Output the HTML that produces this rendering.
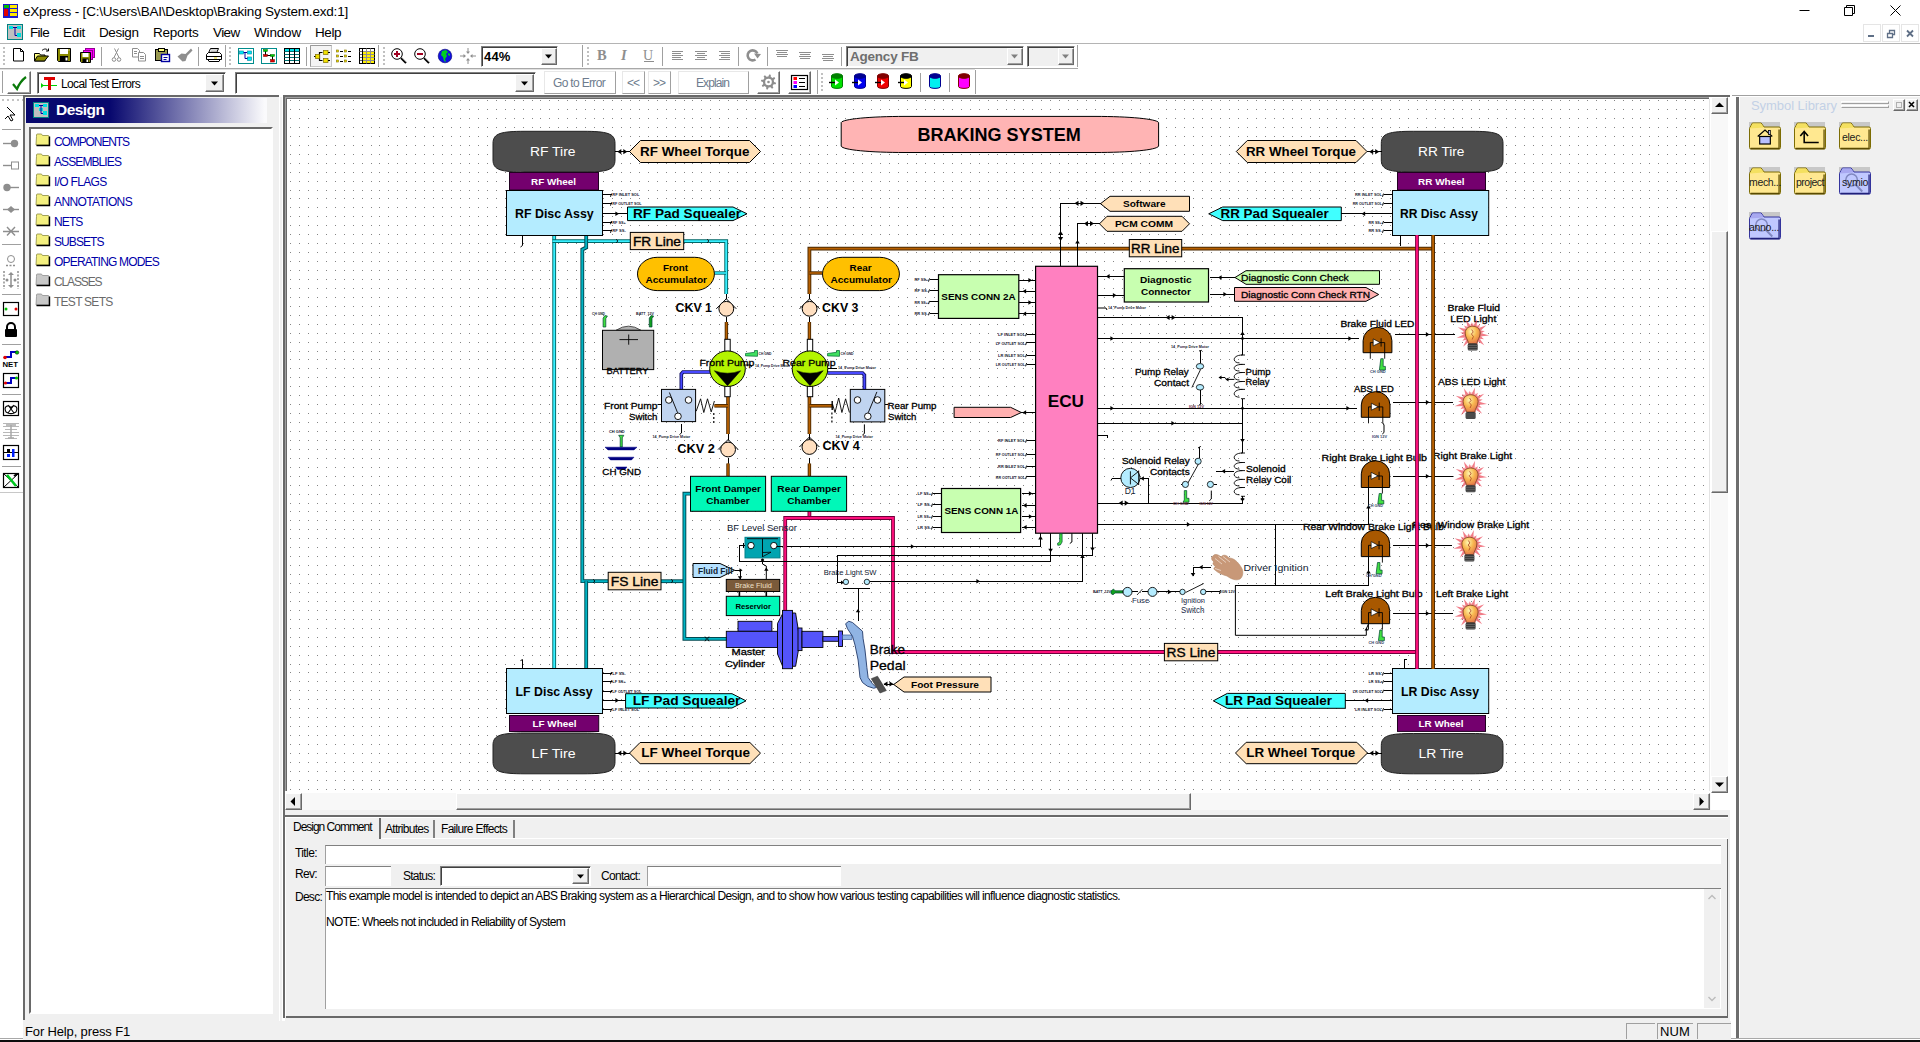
<!DOCTYPE html>
<html lang="en"><head><meta charset="utf-8"><title>eXpress - Braking System</title>
<style>
*{box-sizing:border-box;margin:0;padding:0}
html,body{width:1920px;height:1042px;overflow:hidden;background:#fff;font-family:"Liberation Sans",sans-serif;font-size:12px;color:#000}
.a{position:absolute}
.t{position:absolute;white-space:nowrap;line-height:1}
.menu{font-size:13.5px;top:26px}
.sunk{position:absolute;background:#fff;border:1px solid;border-color:#808080 #fff #fff #808080;box-shadow:inset 1px 1px 0 #404040}
.rais{position:absolute;background:#f0f0f0;border:1px solid;border-color:#fff #696969 #696969 #fff;box-shadow:inset -1px -1px 0 #a0a0a0}
.btn{position:absolute;background:#fff;border:1px solid;border-color:#e8e8e8 #a0a0a0 #a0a0a0 #e8e8e8}
.sep{position:absolute;width:2px;border-left:1px solid #a0a0a0;border-right:1px solid #fff}
.tree{font-size:12px;color:#0000a0;left:54px;letter-spacing:-0.2px}
.grip{position:absolute;width:3px;border-left:2px dotted #c0c0c0}
svg text{font-family:"Liberation Sans",sans-serif}
</style></head><body>
<!-- ===== title bar ===== -->
<svg class="a" style="left:3px;top:3px" width="15" height="15" viewBox="0 0 15 15"><rect x="0" y="1" width="15" height="14" fill="#1c1ccc"/><rect x="1" y="2" width="5" height="3" fill="#00c000"/><rect x="1" y="6" width="4" height="7" fill="#e00000"/><rect x="7" y="2" width="7" height="3" fill="#ffe800"/><rect x="7" y="6" width="7" height="3" fill="#ffe800"/><rect x="7" y="10" width="7" height="3" fill="#ffe800"/></svg>
<div class="t" style="left:23px;top:5px;font-size:13.5px;letter-spacing:-0.195px">eXpress - [C:\Users\BAI\Desktop\Braking System.exd:1]</div>
<svg class="a" style="left:1790px;top:0" width="130" height="22" viewBox="0 0 130 22"><path d="M9.5 10.5h10M54.5 7.5h8v8h-8zM56.5 7.5v-2h8v8h-2M100.500 5.500l10 10M110.500 5.500l-10 10" fill="none" stroke="#000" stroke-width="1"/></svg>
<!-- ===== menu bar ===== -->
<svg class="a" style="left:7px;top:24px" width="16" height="16" viewBox="0 0 16 16"><rect x=".5" y=".5" width="15" height="15" fill="#c0c0c0" stroke="#008080"/><rect x="2" y="2" width="4" height="3" fill="#00e0e0"/><rect x="10" y="2" width="4" height="3" fill="#00e0e0"/><rect x="10" y="9" width="4" height="4" fill="#00e0e0"/><path d="M6 3.500h4M8 3.500v8h2" stroke="#0000a0" fill="none"/></svg>
<div class="t menu" style="left:30px;letter-spacing:-0.688px">File</div>
<div class="t menu" style="left:63px;letter-spacing:-0.316px">Edit</div>
<div class="t menu" style="left:99px;letter-spacing:-0.420px">Design</div>
<div class="t menu" style="left:153px;letter-spacing:-0.252px">Reports</div>
<div class="t menu" style="left:213px;letter-spacing:-0.629px">View</div>
<div class="t menu" style="left:254px;letter-spacing:-0.169px">Window</div>
<div class="t menu" style="left:315px;letter-spacing:-0.441px">Help</div>
<!-- mdi buttons -->
<div class="a" style="left:1863px;top:24px;width:18px;height:18px;border:1px solid #e5e5e5"></div>
<div class="a" style="left:1882px;top:24px;width:18px;height:18px;border:1px solid #e5e5e5"></div>
<div class="a" style="left:1901px;top:24px;width:18px;height:18px;border:1px solid #e5e5e5"></div>
<svg class="a" style="left:1863px;top:24px" width="57" height="18" viewBox="0 0 57 18"><path d="M5 12h6" stroke="#5f6f86" stroke-width="2"/><path d="M24.500 9.500h5v4h-5zM26.500 9v-2.500h5v4h-2" fill="none" stroke="#5f6f86" stroke-width="1.300"/><path d="M44 6.500l6 6M50 6.500l-6 6" stroke="#5f6f86" stroke-width="1.800"/></svg>
<!-- ===== toolbar 1 ===== -->
<div class="a" style="left:0;top:43px;width:1920px;height:1px;background:#b4b4b4"></div>
<div class="a" style="left:0;top:68px;width:1078px;height:1px;background:#a8a8a8"></div>
<div class="grip" style="left:3px;top:47px;height:18px"></div>
<div class="grip" style="left:229px;top:47px;height:18px"></div>
<div class="grip" style="left:383px;top:47px;height:18px"></div>
<div class="grip" style="left:587px;top:47px;height:18px"></div>
<div class="sep" style="left:101px;top:47px;height:19px"></div>
<div class="sep" style="left:198px;top:47px;height:19px"></div>
<div class="sep" style="left:225px;top:45px;height:22px"></div>
<div class="sep" style="left:306px;top:47px;height:19px"></div>
<div class="sep" style="left:378px;top:45px;height:22px"></div>
<div class="sep" style="left:582px;top:45px;height:22px"></div>
<div class="sep" style="left:662px;top:47px;height:19px"></div>
<div class="sep" style="left:738px;top:47px;height:19px"></div>
<div class="sep" style="left:767px;top:47px;height:19px"></div>
<div class="sep" style="left:841px;top:47px;height:19px"></div>
<div class="sep" style="left:1077px;top:45px;height:22px"></div>
<div class="sunk" style="left:481px;top:46px;width:77px;height:21px"></div>
<div class="t" style="left:484px;top:50px;font-size:13px;font-weight:bold;letter-spacing:0.161px">44%</div>
<div class="rais" style="left:541px;top:48px;width:16px;height:17px"></div>
<svg class="a" style="left:545px;top:54px" width="8" height="5"><path d="M0 .5h7l-3.500 4z" fill="#000"/></svg>
<div class="sunk" style="left:846px;top:46px;width:178px;height:21px;background:#f0f0f0"></div>
<div class="t" style="left:850px;top:50px;font-size:13.5px;font-weight:bold;color:#6e6e6e;letter-spacing:-0.223px">Agency FB</div>
<div class="rais" style="left:1007px;top:48px;width:16px;height:17px"></div>
<svg class="a" style="left:1011px;top:54px" width="8" height="5"><path d="M0 .5h7l-3.500 4z" fill="#808080"/></svg>
<div class="sunk" style="left:1027px;top:46px;width:48px;height:21px;background:#f0f0f0"></div>
<div class="rais" style="left:1058px;top:48px;width:16px;height:17px"></div>
<svg class="a" style="left:1062px;top:54px" width="8" height="5"><path d="M0 .5h7l-3.500 4z" fill="#808080"/></svg>
<!-- ===== toolbar 2 ===== -->
<div class="a" style="left:0;top:69px;width:975px;height:1px;background:#e0e0e0"></div>
<div class="a" style="left:0;top:95px;width:23px;height:1px;background:#a0a0a0"></div>
<div class="sep" style="left:2px;top:71px;height:22px"></div>
<div class="rais" style="left:7px;top:71px;width:24px;height:23px;background:#fff"></div>
<svg class="a" style="left:11px;top:75px" width="16" height="16"><path d="M2 9l4 5c2-5 5-9 9-12" fill="none" stroke="#0a7a0a" stroke-width="2.200"/></svg>
<div class="sunk" style="left:37px;top:72px;width:189px;height:22px"></div>
<svg class="a" style="left:40px;top:75px" width="18" height="16"><path d="M1 10.500h16" stroke="#00d000" stroke-width="1"/><path d="M1 8l3 2.500-3 2.500z" fill="#00d000"/><path d="M4 2h11v3h-4v10h-3v-10h-4z" fill="#e00000"/></svg>
<div class="t" style="left:61px;top:78px;font-size:12px;letter-spacing:-0.636px">Local Test Errors</div>
<div class="rais" style="left:205px;top:74px;width:19px;height:18px"></div>
<svg class="a" style="left:211px;top:81px" width="8" height="5"><path d="M0 .5h7l-3.500 4z" fill="#000"/></svg>
<div class="sunk" style="left:235px;top:72px;width:301px;height:22px"></div>
<div class="rais" style="left:515px;top:74px;width:19px;height:18px"></div>
<svg class="a" style="left:521px;top:81px" width="8" height="5"><path d="M0 .5h7l-3.500 4z" fill="#000"/></svg>
<div class="btn" style="left:544px;top:71px;width:72px;height:23px"></div>
<div class="t" style="left:553px;top:77px;font-size:12px;color:#6d7b8d;letter-spacing:-0.668px">Go to Error</div>
<div class="btn" style="left:622px;top:71px;width:23px;height:23px"></div>
<div class="t" style="left:627px;top:77px;font-size:12px;color:#6d7b8d;letter-spacing:-1.009px">&lt;&lt;</div>
<div class="btn" style="left:648px;top:71px;width:23px;height:23px"></div>
<div class="t" style="left:653px;top:77px;font-size:12px;color:#6d7b8d;letter-spacing:-1.009px">&gt;&gt;</div>
<div class="btn" style="left:678px;top:71px;width:71px;height:23px"></div>
<div class="t" style="left:696px;top:77px;font-size:12px;color:#6d7b8d;letter-spacing:-0.908px">Explain</div>
<div class="rais" style="left:757px;top:71px;width:23px;height:23px;background:#fff"></div>
<div class="rais" style="left:788px;top:71px;width:23px;height:23px;background:#fff"></div>
<div class="sep" style="left:817px;top:70px;height:24px"></div>
<div class="grip" style="left:821px;top:73px;height:18px"></div>
<div class="sep" style="left:920px;top:73px;height:19px"></div>
<div class="sep" style="left:949px;top:73px;height:19px"></div>
<div class="sep" style="left:975px;top:70px;height:24px"></div>

<!-- ===== left vertical toolbar ===== -->
<div class="a" style="left:2px;top:99px;width:22px;height:2px;background:repeating-linear-gradient(90deg,#c4c4c4 0,#c4c4c4 2px,transparent 2px,transparent 5px)"></div>

<!-- ===== design panel ===== -->
<div class="a" style="left:23px;top:97px;width:256px;height:924px;background:#f0f0f0"></div>
<div class="a" style="left:23px;top:95px;width:256px;height:2px;background:#696969"></div>
<div class="a" style="left:23px;top:97px;width:2px;height:923px;background:#696969"></div>
<div class="a" style="left:279px;top:95px;width:4px;height:2px;background:#fff"></div><div class="a" style="left:279px;top:97px;width:1px;height:924px;background:#fff"></div><div class="a" style="left:282px;top:97px;width:1px;height:924px;background:#fff"></div>
<div class="a" style="left:280px;top:97px;width:2px;height:924px;background:#f0f0f0"></div>
<div class="a" style="left:26px;top:98px;width:241px;height:25px;background:linear-gradient(90deg,#08086e 0,#08086e 35%,#fafafc 99%)"></div>
<svg class="a" style="left:33px;top:102px" width="17" height="16" viewBox="0 0 17 16"><rect x=".5" y=".5" width="15" height="15" fill="#c0c0c0" stroke="#008080"/><rect x="2" y="2" width="4" height="3" fill="#00e0e0"/><rect x="10" y="2" width="4" height="3" fill="#00e0e0"/><rect x="10" y="9" width="4" height="4" fill="#00e0e0"/><rect x="6" y="6" width="4" height="3" fill="#00e0e0"/><path d="M6 3.500h4M8 3.500v8h2" stroke="#0000a0" fill="none"/></svg>
<div class="t" style="left:56px;top:102px;font-size:15.500px;font-weight:bold;color:#fff;letter-spacing:-0.529px">Design</div>
<div class="a" style="left:29px;top:127px;width:244px;height:887px;background:#fff;border:2px solid;border-color:#696969 #fff #fff #696969"></div>
<svg class="a" style="left:35px;top:133px" width="16" height="15" viewBox="0 0 16 15"><path d="M1.500 3.500v-1.500q0-1 1-1h3.500q1 0 1.500 1.500h5.500q1 0 1 1v8.500h-13z" fill="#f4f080" stroke="#8a8a40" stroke-width=".8"/><path d="M1.500 12.500h13v-9" fill="none" stroke="#000" stroke-width="1.400"/></svg>
<div class="t tree" style="top:136px;font-size:12px;color:#0000a8;letter-spacing:-1.100px">COMPONENTS</div>
<svg class="a" style="left:35px;top:153px" width="16" height="15" viewBox="0 0 16 15"><path d="M1.500 3.500v-1.500q0-1 1-1h3.500q1 0 1.500 1.500h5.500q1 0 1 1v8.500h-13z" fill="#f4f080" stroke="#8a8a40" stroke-width=".8"/><path d="M1.500 12.500h13v-9" fill="none" stroke="#000" stroke-width="1.400"/></svg>
<div class="t tree" style="top:156px;font-size:12px;color:#0000a8;letter-spacing:-0.903px">ASSEMBLIES</div>
<svg class="a" style="left:35px;top:173px" width="16" height="15" viewBox="0 0 16 15"><path d="M1.500 3.500v-1.500q0-1 1-1h3.500q1 0 1.500 1.500h5.500q1 0 1 1v8.500h-13z" fill="#f4f080" stroke="#8a8a40" stroke-width=".8"/><path d="M1.500 12.500h13v-9" fill="none" stroke="#000" stroke-width="1.400"/></svg>
<div class="t tree" style="top:176px;font-size:12px;color:#0000a8;letter-spacing:-0.687px">I/O FLAGS</div>
<svg class="a" style="left:35px;top:193px" width="16" height="15" viewBox="0 0 16 15"><path d="M1.500 3.500v-1.500q0-1 1-1h3.500q1 0 1.500 1.500h5.500q1 0 1 1v8.500h-13z" fill="#f4f080" stroke="#8a8a40" stroke-width=".8"/><path d="M1.500 12.500h13v-9" fill="none" stroke="#000" stroke-width="1.400"/></svg>
<div class="t tree" style="top:196px;font-size:12px;color:#0000a8;letter-spacing:-0.626px">ANNOTATIONS</div>
<svg class="a" style="left:35px;top:213px" width="16" height="15" viewBox="0 0 16 15"><path d="M1.500 3.500v-1.500q0-1 1-1h3.500q1 0 1.500 1.500h5.500q1 0 1 1v8.500h-13z" fill="#f4f080" stroke="#8a8a40" stroke-width=".8"/><path d="M1.500 12.500h13v-9" fill="none" stroke="#000" stroke-width="1.400"/></svg>
<div class="t tree" style="top:216px;font-size:12px;color:#0000a8;letter-spacing:-0.876px">NETS</div>
<svg class="a" style="left:35px;top:233px" width="16" height="15" viewBox="0 0 16 15"><path d="M1.500 3.500v-1.500q0-1 1-1h3.500q1 0 1.500 1.500h5.500q1 0 1 1v8.500h-13z" fill="#f4f080" stroke="#8a8a40" stroke-width=".8"/><path d="M1.500 12.500h13v-9" fill="none" stroke="#000" stroke-width="1.400"/></svg>
<div class="t tree" style="top:236px;font-size:12px;color:#0000a8;letter-spacing:-0.931px">SUBSETS</div>
<svg class="a" style="left:35px;top:253px" width="16" height="15" viewBox="0 0 16 15"><path d="M1.500 3.500v-1.500q0-1 1-1h3.500q1 0 1.500 1.500h5.500q1 0 1 1v8.500h-13z" fill="#f4f080" stroke="#8a8a40" stroke-width=".8"/><path d="M1.500 12.500h13v-9" fill="none" stroke="#000" stroke-width="1.400"/></svg>
<div class="t tree" style="top:256px;font-size:12px;color:#0000a8;letter-spacing:-0.808px">OPERATING MODES</div>
<svg class="a" style="left:35px;top:273px" width="16" height="15" viewBox="0 0 16 15"><path d="M1.500 3.500v-1.500q0-1 1-1h3.500q1 0 1.500 1.500h5.500q1 0 1 1v8.500h-13z" fill="#c8c8c8" stroke="#909090" stroke-width=".8"/><path d="M1.500 12.500h13v-9" fill="none" stroke="#000" stroke-width="1.400"/></svg>
<div class="t tree" style="top:276px;font-size:12px;color:#6a6a6a;letter-spacing:-1.123px">CLASSES</div>
<svg class="a" style="left:35px;top:293px" width="16" height="15" viewBox="0 0 16 15"><path d="M1.500 3.500v-1.500q0-1 1-1h3.500q1 0 1.500 1.500h5.500q1 0 1 1v8.500h-13z" fill="#c8c8c8" stroke="#909090" stroke-width=".8"/><path d="M1.500 12.500h13v-9" fill="none" stroke="#000" stroke-width="1.400"/></svg>
<div class="t tree" style="top:296px;font-size:12px;color:#6a6a6a;letter-spacing:-0.736px">TEST SETS</div>

<!-- ===== canvas frame ===== -->
<div class="a" style="left:283px;top:95px;width:1448px;height:717px;background:#fff"></div>
<div class="a" style="left:283px;top:95px;width:1447px;height:2px;background:#696969"></div>
<div class="a" style="left:283px;top:95px;width:2px;height:923px;background:#696969"></div>
<div class="a" style="left:285px;top:97px;width:1424px;height:694px;border-left:1px solid #a0a0a0;border-top:1px solid #a0a0a0"></div>
<div class="a" style="left:286px;top:98px;width:1423px;height:693px;border-left:1px solid #696969;border-top:1px solid #696969"></div>
<div class="a" style="left:1709px;top:99px;width:1px;height:692px;background:#e4e4e4"></div>
<!-- v scroll -->
<div class="a" style="left:1711px;top:97px;width:17px;height:696px;background:#f8f8f8"></div>
<div class="rais" style="left:1711px;top:97px;width:17px;height:17px"></div>
<svg class="a" style="left:1715px;top:102px" width="9" height="6"><path d="M0 5h9l-4.500-4.500z" fill="#000"/></svg>
<div class="rais" style="left:1711px;top:231px;width:17px;height:262px"></div>
<div class="rais" style="left:1711px;top:776px;width:17px;height:17px"></div>
<svg class="a" style="left:1715px;top:782px" width="9" height="6"><path d="M0 .5h9l-4.500 4.500z" fill="#000"/></svg>
<!-- h scroll -->
<div class="a" style="left:286px;top:793px;width:1425px;height:17px;background:#f8f8f8"></div>
<div class="rais" style="left:285px;top:793px;width:17px;height:17px"></div>
<svg class="a" style="left:290px;top:797px" width="6" height="9"><path d="M5 0v9l-4.500-4.500z" fill="#000"/></svg>
<div class="rais" style="left:456px;top:793px;width:735px;height:17px"></div>
<div class="rais" style="left:1693px;top:793px;width:17px;height:17px"></div>
<svg class="a" style="left:1699px;top:797px" width="6" height="9"><path d="M.5 0v9l4.500-4.500z" fill="#000"/></svg>
<div class="a" style="left:285px;top:810px;width:1445px;height:5px;background:#f0f0f0"></div>
<!-- ===== bottom panel ===== -->
<div class="a" style="left:285px;top:815px;width:1445px;height:207px;background:#f0f0f0"></div>
<div class="a" style="left:283px;top:815px;width:1445px;height:2px;background:#696969"></div><div class="a" style="left:285px;top:817px;width:1443px;height:1px;background:#fff"></div><div class="a" style="left:285px;top:817px;width:1px;height:199px;background:#fff"></div>

<div class="a" style="left:286px;top:1016px;width:1442px;height:2px;background:#696969"></div>
<div class="a" style="left:1727px;top:838px;width:1px;height:180px;background:#696969"></div>
<div class="a" style="left:380px;top:838px;width:1348px;height:1px;background:#fff"></div>
<div class="a" style="left:379px;top:818px;width:2px;height:21px;background:#696969"></div>
<div class="a" style="left:433px;top:820px;width:2px;height:18px;background:#808080"></div>
<div class="a" style="left:513px;top:820px;width:2px;height:18px;background:#808080"></div>
<div class="t" style="left:293px;top:821px;font-size:12px;letter-spacing:-1.014px">Design Comment</div>
<div class="t" style="left:385px;top:823px;font-size:12px;letter-spacing:-0.719px">Attributes</div>
<div class="t" style="left:441px;top:823px;font-size:12px;letter-spacing:-0.698px">Failure Effects</div>
<div class="t" style="left:295px;top:847px;font-size:12px;letter-spacing:-0.593px">Title:</div>
<div class="t" style="left:295px;top:868px;font-size:12px;letter-spacing:-0.668px">Rev:</div>
<div class="t" style="left:403px;top:870px;font-size:12px;letter-spacing:-0.765px">Status:</div>
<div class="t" style="left:601px;top:870px;font-size:12px;letter-spacing:-0.711px">Contact:</div>
<div class="t" style="left:295px;top:891px;font-size:12px;letter-spacing:-0.735px">Desc:</div>
<div class="a" style="left:325px;top:845px;width:1396px;height:19px;background:#fff;border-top:1px solid #808080;border-left:1px solid #a0a0a0"></div>
<div class="a" style="left:325px;top:866px;width:66px;height:20px;background:#fff;border-top:1px solid #808080;border-left:1px solid #a0a0a0"></div>
<div class="sunk" style="left:440px;top:866px;width:151px;height:20px"></div>
<div class="rais" style="left:572px;top:868px;width:17px;height:16px"></div>
<svg class="a" style="left:577px;top:874px" width="8" height="5"><path d="M0 .5h7l-3.500 4z" fill="#000"/></svg>
<div class="a" style="left:647px;top:866px;width:194px;height:20px;background:#fff;border-top:1px solid #808080;border-left:1px solid #a0a0a0"></div>
<div class="a" style="left:325px;top:888px;width:1396px;height:121px;background:#fff;border-top:1px solid #808080;border-left:1px solid #a0a0a0"></div>
<div class="a" style="left:1704px;top:889px;width:16px;height:119px;background:#f0f0f0"></div>
<svg class="a" style="left:1707px;top:893px" width="10" height="112"><path d="M1.500 6l3.500-3.500 3.500 3.500M1.500 104l3.500 3.500 3.500-3.500" fill="none" stroke="#bcbcbc" stroke-width="1.400"/></svg>
<div class="t" style="left:326px;top:890px;font-size:12px;letter-spacing:-0.626px">This example model is intended to depict an ABS Braking system as a Hierarchical Design, and to show how various testing capabilities will influence diagnostic statistics.</div>
<div class="t" style="left:326px;top:916px;font-size:12px;letter-spacing:-0.662px">NOTE: Wheels not included in Reliability of System</div>
<!-- ===== status bar ===== -->
<div class="a" style="left:23px;top:1021px;width:1708px;height:19px;background:#f0f0f0"></div>
<div class="t" style="left:25px;top:1025px;font-size:13px;letter-spacing:-0.146px">For Help, press F1</div>
<div class="a" style="left:1626px;top:1023px;width:29px;height:16px;border-top:1px solid #a0a0a0;border-left:1px solid #a0a0a0"></div>
<div class="a" style="left:1657px;top:1023px;width:36px;height:16px;border-top:1px solid #a0a0a0;border-left:1px solid #a0a0a0"></div>
<div class="a" style="left:1697px;top:1023px;width:34px;height:16px;border-top:1px solid #a0a0a0;border-left:1px solid #a0a0a0"></div>
<div class="t" style="left:1660px;top:1025px;font-size:13px;letter-spacing:0.132px">NUM</div>
<!-- ===== symbol library ===== -->
<div class="a" style="left:1740px;top:97px;width:180px;height:942px;background:#f0f0f0"></div>
<div class="a" style="left:1736px;top:97px;width:3px;height:942px;background:#6e6e6e"></div><div class="a" style="left:1732px;top:95px;width:188px;height:1px;background:#a0a0a0"></div>
<div class="a" style="left:1731px;top:1038px;width:189px;height:1px;background:#a8a8a8"></div><div class="a" style="left:1731px;top:1039px;width:189px;height:1px;background:#fff"></div>
<div class="t" style="left:1751px;top:99px;font-size:13px;color:#c3d1e6;letter-spacing:-0.049px">Symbol Library</div>
<div class="a" style="left:1841px;top:101px;width:48px;height:3px;border:1px solid;border-color:#fff #a0a0a0 #a0a0a0 #fff"></div>
<div class="a" style="left:1841px;top:105px;width:48px;height:3px;border:1px solid;border-color:#fff #a0a0a0 #a0a0a0 #fff"></div>
<div class="rais" style="left:1893px;top:99px;width:12px;height:12px"></div>
<div class="rais" style="left:1906px;top:99px;width:12px;height:12px"></div>
<svg class="a" style="left:1893px;top:99px" width="25" height="12"><rect x="3.500" y="3.500" width="5" height="5" fill="none" stroke="#b0b0b0"/><path d="M16 3l5 5M21 3l-5 5" stroke="#000" stroke-width="1.600"/></svg>
<svg class="a" style="left:1749px;top:122px" width="32" height="28" viewBox="0 0 33 28" preserveAspectRatio="none"><rect x="0" y="0" width="32" height="7" fill="#c8c8c8"/><path d="M.5 6.500l3-5.500h9l3 4h15.500q1.500 0 1.500 1.500v19q0 1.500-1.500 1.500h-29q-1.500 0-1.500-1.500z" fill="#ffe890" stroke="#7a6a00" stroke-width="1"/><path d="M1 6.500l2.800-5h8.500l3 4" fill="#f4e060" stroke="none"/><path d="M1.500 26.500h29.500v-19" fill="none" stroke="#5a4a00" stroke-width="1.300"/><path d="M9 14.500l7.500-6.500l7.500 6.500" fill="none" stroke="#000" stroke-width="1.300"/><rect x="11" y="14.500" width="11" height="7.500" fill="#b8c0ff" stroke="#000" stroke-width="1.200"/><rect x="20" y="8.500" width="2" height="4" fill="#b8c0ff" stroke="#000" stroke-width=".8"/></svg>
<svg class="a" style="left:1794px;top:122px" width="32" height="28" viewBox="0 0 33 28" preserveAspectRatio="none"><rect x="0" y="0" width="32" height="7" fill="#c8c8c8"/><path d="M.5 6.500l3-5.500h9l3 4h15.500q1.500 0 1.500 1.500v19q0 1.500-1.500 1.500h-29q-1.500 0-1.500-1.500z" fill="#ffe890" stroke="#7a6a00" stroke-width="1"/><path d="M1 6.500l2.800-5h8.500l3 4" fill="#f4e060" stroke="none"/><path d="M1.500 26.500h29.500v-19" fill="none" stroke="#5a4a00" stroke-width="1.300"/><path d="M10.500 10v10.500h15" fill="none" stroke="#000" stroke-width="1.600"/><path d="M6.500 14l4-4.500l4 4.500" fill="none" stroke="#000" stroke-width="1.600"/></svg>
<svg class="a" style="left:1839px;top:122px" width="32" height="28" viewBox="0 0 33 28" preserveAspectRatio="none"><rect x="0" y="0" width="32" height="7" fill="#c8c8c8"/><path d="M.5 6.500l3-5.500h9l3 4h15.500q1.500 0 1.500 1.500v19q0 1.500-1.500 1.500h-29q-1.500 0-1.500-1.500z" fill="#ffe890" stroke="#7a6a00" stroke-width="1"/><path d="M1 6.500l2.800-5h8.500l3 4" fill="#f4e060" stroke="none"/><path d="M1.500 26.500h29.500v-19" fill="none" stroke="#5a4a00" stroke-width="1.300"/></svg>
<div class="t" style="left:1842px;top:132px;font-size:10.500px;color:#1a1a1a;letter-spacing:-0.287px">elec...</div>
<svg class="a" style="left:1749px;top:167px" width="32" height="28" viewBox="0 0 33 28" preserveAspectRatio="none"><rect x="0" y="0" width="32" height="7" fill="#c8c8c8"/><path d="M.5 6.500l3-5.500h9l3 4h15.500q1.500 0 1.500 1.500v19q0 1.500-1.500 1.500h-29q-1.500 0-1.500-1.500z" fill="#ffe890" stroke="#7a6a00" stroke-width="1"/><path d="M1 6.500l2.800-5h8.500l3 4" fill="#f4e060" stroke="none"/><path d="M1.500 26.500h29.500v-19" fill="none" stroke="#5a4a00" stroke-width="1.300"/></svg>
<div class="t" style="left:1749px;top:177px;font-size:10.500px;color:#1a1a1a;letter-spacing:-0.346px">mech...</div>
<svg class="a" style="left:1794px;top:167px" width="32" height="28" viewBox="0 0 33 28" preserveAspectRatio="none"><rect x="0" y="0" width="32" height="7" fill="#c8c8c8"/><path d="M.5 6.500l3-5.500h9l3 4h15.500q1.500 0 1.500 1.500v19q0 1.500-1.500 1.500h-29q-1.500 0-1.500-1.500z" fill="#ffe890" stroke="#7a6a00" stroke-width="1"/><path d="M1 6.500l2.800-5h8.500l3 4" fill="#f4e060" stroke="none"/><path d="M1.500 26.500h29.500v-19" fill="none" stroke="#5a4a00" stroke-width="1.300"/></svg>
<div class="t" style="left:1796px;top:177px;font-size:10.500px;color:#1a1a1a;letter-spacing:-0.502px">project</div>
<svg class="a" style="left:1839px;top:167px" width="32" height="28" viewBox="0 0 33 28" preserveAspectRatio="none"><rect x="0" y="0" width="32" height="7" fill="#c8c8c8"/><path d="M.5 6.500l3-5.500h9l3 4h15.500q1.500 0 1.500 1.500v19q0 1.500-1.500 1.500h-29q-1.500 0-1.500-1.500z" fill="#c0c8ff" stroke="#30309a" stroke-width="1"/><path d="M1 6.500l2.800-5h8.500l3 4" fill="#a8a8f0" stroke="none"/><path d="M1.500 26.500h29.500v-19" fill="none" stroke="#20207a" stroke-width="1.300"/><circle cx="13" cy="13" r="6" fill="none" stroke="#8088c0" stroke-width="1.600"/><path d="M17 17.500l7 7" stroke="#8088c0" stroke-width="2"/></svg>
<div class="t" style="left:1842px;top:177px;font-size:10.500px;color:#1a1a1a;letter-spacing:-0.284px">symio</div>
<svg class="a" style="left:1749px;top:212px" width="32" height="28" viewBox="0 0 33 28" preserveAspectRatio="none"><rect x="0" y="0" width="32" height="7" fill="#c8c8c8"/><path d="M.5 6.500l3-5.500h9l3 4h15.500q1.500 0 1.500 1.500v19q0 1.500-1.500 1.500h-29q-1.500 0-1.500-1.500z" fill="#c0c8ff" stroke="#30309a" stroke-width="1"/><path d="M1 6.500l2.800-5h8.500l3 4" fill="#a8a8f0" stroke="none"/><path d="M1.500 26.500h29.500v-19" fill="none" stroke="#20207a" stroke-width="1.300"/><circle cx="13" cy="13" r="6" fill="none" stroke="#8088c0" stroke-width="1.600"/><path d="M17 17.500l7 7" stroke="#8088c0" stroke-width="2"/></svg>
<div class="t" style="left:1749px;top:222px;font-size:10.500px;color:#1a1a1a;letter-spacing:-0.301px">anno...</div>

<svg class="a" style="left:0;top:0" width="1000" height="500" viewBox="0 0 1000 500"><g transform="translate(13 48)"><path d="M.5 .5h7l3 3v9.500h-10z" fill="#fff" stroke="#000"/><path d="M7.500 .5v3h3" fill="none" stroke="#000"/></g>
<g transform="translate(34 48)"><path d="M.5 5.500h5l1 1.500h4.500v6h-10.500z" fill="#ffff80" stroke="#000"/><path d="M.5 13l3-5h11l-4 5z" fill="#8a8a00" stroke="#000"/><path d="M8 2.500c2-2 4.500-2 6 0M14.500 .5v2.500h-2.500" fill="none" stroke="#000"/></g>
<g transform="translate(57 48)"><path d="M.5 .5h13v13h-12l-1-1z" fill="#8a8a00" stroke="#000"/><rect x="3" y="1" width="8" height="5" fill="#fff"/><rect x="3" y="8" width="8" height="5.500" fill="#000"/><rect x="8.500" y="9.500" width="2" height="3" fill="#fff"/><rect x="11.500" y="1.500" width="1" height="1" fill="#fff"/></g>
<g transform="translate(80 48)"><rect x="5.500" y=".5" width="9" height="9" fill="#ff00ff" stroke="#900090"/><rect x="3.500" y="2.500" width="9" height="9" fill="#ff00ff" stroke="#900090"/><path d="M.5 4.500h10v10h-9l-1-1z" fill="#8a8a00" stroke="#000"/><rect x="2.500" y="5" width="6" height="4" fill="#fff"/><rect x="2.500" y="10.500" width="6" height="4" fill="#000"/><rect x="6.500" y="11.500" width="1.500" height="2.500" fill="#fff"/></g>
<g transform="translate(112 48)"><path d="M2.500 .5l4.500 9M6.500 .5l-4.500 9" stroke="#8e8e8e" fill="none"/><circle cx="2" cy="11.500" r="1.800" fill="none" stroke="#8e8e8e"/><circle cx="7" cy="11.500" r="1.800" fill="none" stroke="#8e8e8e"/></g>
<g transform="translate(132 48)"><path d="M.5 .5h5l2 2v6.500h-7z" fill="#fff" stroke="#8e8e8e"/><path d="M6.500 4.500h5l2 2v6.500h-7z" fill="#fff" stroke="#8e8e8e"/><path d="M2 3.500h3M2 5.500h3M8 8.500h4M8 10.500h4" stroke="#8e8e8e"/></g>
<g transform="translate(155 48)"><rect x=".5" y="1.500" width="12" height="11" fill="#9a9a50" stroke="#000"/><rect x="3.500" y=".5" width="6" height="3" fill="#ffff80" stroke="#000"/><rect x="6.500" y="6.500" width="8" height="7" fill="#fff" stroke="#0000a0" stroke-width="1.400"/><path d="M8.500 9.500h4M8.500 11.500h3" stroke="#0000a0"/></g>
<g transform="translate(177 48)"><path d="M14 .5l1.500 2l-5 5l-2 5.500l-3 .5l-5-5l4-3l4 .5z" fill="#8e8e8e"/></g>
<g transform="translate(206 48)"><path d="M4.500 .5h8l-2 4.500h-8z" fill="#fff" stroke="#000"/><path d="M.5 6.500l2-2h11l2 2v5h-15z" fill="#fff" stroke="#000"/><path d="M.5 8.500h15M2 11.500l1 2h10l1-2" fill="none" stroke="#000"/><rect x="8" y="9.500" width="3" height="1" fill="#e0d000"/><path d="M5 2h6M4.500 3.500h6" stroke="#808080" stroke-width=".6"/></g>
<g transform="translate(238 48)"><rect x=".5" y=".5" width="15" height="15" fill="#fff" stroke="#008c8c"/><path d="M4 4.500h5M7 4.500v6h3" stroke="#0000a0" fill="none"/><rect x="1.500" y="3" width="4" height="3" fill="#00e8f8" stroke="#0080a0" stroke-width=".6"/><rect x="9.500" y="3" width="4" height="3" fill="#00e8f8" stroke="#0080a0" stroke-width=".6"/><rect x="9.500" y="9" width="4" height="3.500" fill="#00e8f8" stroke="#0080a0" stroke-width=".6"/></g>
<g transform="translate(261 48)"><rect x=".5" y=".5" width="15" height="15" fill="#fff" stroke="#008c8c"/><path d="M4.500 3v4M5 7.500h6M11.500 8v4" stroke="#000" fill="none"/><rect x="2.500" y="1.500" width="4" height="2" fill="#00d000" stroke="#006000" stroke-width=".5"/><rect x="2.500" y="6.500" width="4" height="2" fill="#e00000" stroke="#600" stroke-width=".5"/><rect x="9.500" y="6.500" width="4" height="2" fill="#00d000" stroke="#006000" stroke-width=".5"/><rect x="9.500" y="11.500" width="4" height="2.500" fill="#e00000" stroke="#600" stroke-width=".5"/></g>
<g transform="translate(284 48)"><rect x=".5" y=".5" width="15" height="15" fill="#fff" stroke="#000"/><rect x="1" y="1" width="14" height="2.500" fill="#00e0e8"/><path d="M.5 3.500h15M.5 6.500h15M.5 9.500h15M.5 12.500h15" stroke="#007070"/><path d="M5.500 .5v15M10.500 .5v15" stroke="#000"/></g>
<rect x="310.500" y="45.500" width="21" height="21" fill="#f4f4f4" stroke="#c8c8c8"/><path d="M310.500 66.500v-21h21" fill="none" stroke="#9a9a9a"/>
<g transform="translate(314 48)"><path d="M0 8.500h5.500M8.500 4.500h-3v8h3" stroke="#000" fill="none" stroke-width="1.200"/><rect x="1.500" y="6.500" width="4" height="4" fill="#f0e000" stroke="#807000" stroke-width=".7"/><rect x="9.500" y="2.500" width="4.500" height="4" fill="#f0e000" stroke="#807000" stroke-width=".7"/><rect x="9.500" y="10.500" width="4.500" height="4" fill="#f0e000" stroke="#807000" stroke-width=".7"/><path d="M14 4.500h2M14 12.500h2" stroke="#000"/></g>
<g transform="translate(335.5 48)"><rect x="1" y="2" width="2" height="2" fill="#f0e000" stroke="#807000" stroke-width=".6"/><rect x="9" y="2" width="2" height="2" fill="#f0e000" stroke="#807000" stroke-width=".6"/><path d="M4.500 3.5h3M12.500 3.5h3" stroke="#000" stroke-width="1" shape-rendering="crispEdges"/><rect x="1" y="7" width="2" height="2" fill="#f0e000" stroke="#807000" stroke-width=".6"/><rect x="9" y="7" width="2" height="2" fill="#f0e000" stroke="#807000" stroke-width=".6"/><path d="M4.500 8.5h3M12.500 8.5h3" stroke="#000" stroke-width="1" shape-rendering="crispEdges"/><rect x="1" y="12" width="2" height="2" fill="#f0e000" stroke="#807000" stroke-width=".6"/><rect x="9" y="12" width="2" height="2" fill="#f0e000" stroke="#807000" stroke-width=".6"/><path d="M4.500 13.5h3M12.500 13.5h3" stroke="#000" stroke-width="1" shape-rendering="crispEdges"/></g>
<g transform="translate(359 48)"><rect x=".5" y=".5" width="15" height="15" fill="#fff000" stroke="#000"/><rect x="1" y="1" width="14" height="2" fill="#fff"/><path d="M.5 3.500h15M3.500 6.500h12M3.500 9.500h12M3.500 12.500h12" stroke="#909090"/><path d="M3.500 .5v15" stroke="#000"/><path d="M7.500 .5v15M11.500 .5v15" stroke="#909090"/><rect x="1" y="1" width="2" height="14" fill="#fff"/><path d="M.5 3.500h3M.5 6.500h3M.5 9.500h3M.5 12.500h3" stroke="#000" stroke-width=".6"/></g>
<g transform="translate(391 48)"><circle cx="6" cy="6" r="5.300" fill="#fff" stroke="#000"/><path d="M3 6h6M6 3v6" stroke="#a00020" stroke-width="2"/><path d="M10 10l5 5" stroke="#000" stroke-width="2"/><path d="M10.500 9.500l5 5" stroke="#909090" stroke-width=".8"/></g>
<g transform="translate(414 48)"><circle cx="6" cy="6" r="5.300" fill="#fff" stroke="#000"/><path d="M3 6h6" stroke="#a00020" stroke-width="2"/><path d="M10 10l5 5" stroke="#000" stroke-width="2"/><path d="M10.500 9.500l5 5" stroke="#909090" stroke-width=".8"/></g>
<g transform="translate(438 49)"><circle cx="7" cy="7" r="6.800" fill="#1010e0" stroke="#000070" stroke-width=".6"/><path d="M4 2l4-1l2 2l-2 2l1 2l-2 3l1 3l-2-1l-1-4l-2-2z" fill="#00d020"/><path d="M10 4l2 1l0 2l-2-1z" fill="#00d020"/></g>
<g transform="translate(460 48)"><path d="M8 0v5M8 16v-5M0 8h5M16 8h-5" stroke="#8e8e8e" stroke-width="1"/><path d="M6 3.500l2 2.500l2-2.500zM6 12.500l2-2.500l2 2.500zM3.500 6l2.500 2l-2.500 2zM12.500 6l-2.500 2l2.500 2z" fill="#8e8e8e"/></g>
<text x="597" y="60" style="font-family:Liberation Serif,serif" font-weight="bold" font-size="14.500" fill="#8e8e8e">B</text>
<text x="621" y="60" style="font-family:Liberation Serif,serif" font-weight="bold" font-style="italic" font-size="14.500" fill="#8e8e8e">I</text>
<text x="643" y="59.500" style="font-family:Liberation Serif,serif" font-size="14" fill="#8e8e8e">U</text><path d="M644 61.500h10" stroke="#8e8e8e"/>
<path d="M672 51.5h11M672 53.5h9M672 55.5h11M672 57.5h9M672 59.5h11" stroke="#8e8e8e" stroke-width="1"/>
<path d="M695.0 51.5h12M697.0 53.5h8M695.0 55.5h12M697.0 57.5h8M695.0 59.5h12" stroke="#8e8e8e" stroke-width="1"/>
<path d="M719 51.5h11M721 53.5h9M719 55.5h11M721 57.5h9M719 59.5h11" stroke="#8e8e8e" stroke-width="1"/>
<g transform="translate(745 48)"><path d="M10.500 11.500a5 5 0 1 1 1.800-6" fill="none" stroke="#8e8e8e" stroke-width="2.600"/><path d="M9 5.500l7 .5l-3.500 4.500z" fill="#8e8e8e"/></g>
<path d="M776.0 50.5h12M777.0 52.5h10M776.0 54.5h12M777.0 56.5h10" stroke="#8e8e8e" stroke-width="1"/>
<path d="M799.0 52.5h12M800.0 54.5h10M799.0 56.5h12M800.0 58.5h10" stroke="#8e8e8e" stroke-width="1"/>
<path d="M822.0 54.5h12M823.0 56.5h10M822.0 58.5h12M823.0 60.5h10" stroke="#8e8e8e" stroke-width="1"/>
<polygon points="776.07,82.66 775.75,84.29 773.63,84.25 772.54,85.88 773.39,87.82 772.00,88.74 770.54,87.22 768.61,87.60 767.84,89.57 766.21,89.25 766.25,87.13 764.62,86.04 762.68,86.89 761.76,85.50 763.28,84.04 762.90,82.11 760.93,81.34 761.25,79.71 763.37,79.75 764.46,78.12 763.61,76.18 765.00,75.26 766.46,76.78 768.39,76.40 769.16,74.43 770.79,74.75 770.75,76.87 772.38,77.96 774.32,77.11 775.24,78.50 773.72,79.96 774.10,81.89" fill="#8e8e8e"/><circle cx="768.500" cy="82" r="3.300" fill="#fff"/><circle cx="768.500" cy="82" r="1.300" fill="#8e8e8e"/>
<g transform="translate(791 75)"><rect x=".5" y=".5" width="16" height="14" fill="#fff" stroke="#000" stroke-width="1.200"/><rect x="2.500" y="2" width="3.500" height="3" fill="#f00"/><rect x="2.500" y="6" width="3.500" height="3" fill="#f0f"/><rect x="2.500" y="10" width="3.500" height="3" fill="#00f"/><path d="M8 3.500h6M8 7.500h6M8 11.500h6" stroke="#000" stroke-width="1.200"/></g>
<g transform="translate(831 73)"><path d="M.5 3v10.500c0 2.500 11 2.500 11 0v-10.500z" fill="#00e000" stroke="#008000"/><ellipse cx="6" cy="3" rx="5.500" ry="2.300" fill="#008000" stroke="#008000"/><path d="M-2 9.500h7" stroke="#000" stroke-width="1.400"/><path d="M4 6.500l4 3l-4 3z" fill="#fff"/></g>
<g transform="translate(854 73)"><path d="M.5 3v10.500c0 2.500 11 2.500 11 0v-10.500z" fill="#0000f0" stroke="#000090"/><ellipse cx="6" cy="3" rx="5.500" ry="2.300" fill="#000090" stroke="#000090"/><path d="M-2 9.500h7" stroke="#000" stroke-width="1.400"/><path d="M4 6.500l4 3l-4 3z" fill="#fff"/></g>
<g transform="translate(877 73)"><path d="M.5 3v10.500c0 2.500 11 2.500 11 0v-10.500z" fill="#f00000" stroke="#800000"/><ellipse cx="6" cy="3" rx="5.500" ry="2.300" fill="#800000" stroke="#800000"/><path d="M-2 9.500h7" stroke="#000" stroke-width="1.400"/><path d="M4 6.500l4 3l-4 3z" fill="#fff"/></g>
<g transform="translate(900 73)"><path d="M.5 3v10.500c0 2.500 11 2.500 11 0v-10.500z" fill="#ffff00" stroke="#000"/><ellipse cx="6" cy="3" rx="5.500" ry="2.300" fill="#000" stroke="#000"/><path d="M-2 9.500h7" stroke="#000" stroke-width="1.400"/><path d="M4 6.500l4 3l-4 3z" fill="#fff"/></g>
<g transform="translate(929 73)"><path d="M.5 3v10.500c0 2.500 11 2.500 11 0v-10.500z" fill="#00f0f0" stroke="#000090"/><ellipse cx="6" cy="3" rx="5.500" ry="2.300" fill="#000090" stroke="#000090"/></g>
<g transform="translate(958 73)"><path d="M.5 3v10.500c0 2.500 11 2.500 11 0v-10.500z" fill="#ff00ff" stroke="#800000"/><ellipse cx="6" cy="3" rx="5.500" ry="2.300" fill="#800000" stroke="#800000"/></g>
<path d="M7 107l8 8l-5 0l3 5l-2 1l-3-5l-3 3" fill="none" stroke="#000" stroke-width="1"/>
<path d="M2 129.5h19" stroke="#a0a0a0"/><path d="M2 130.5h19" stroke="#fff"/>
<path d="M3 143.500h9" stroke="#8e8e8e" stroke-width="1.400"/><circle cx="14.500" cy="143.500" r="3.700" fill="#8e8e8e"/>
<path d="M3 165.500h8" stroke="#8e8e8e" stroke-width="1.400"/><rect x="11.500" y="162" width="7" height="7" fill="#fff" stroke="#8e8e8e"/>
<path d="M9 187.500h10" stroke="#8e8e8e" stroke-width="1.400"/><circle cx="7" cy="187.500" r="3.700" fill="#8e8e8e"/>
<path d="M3 209.500h16" stroke="#8e8e8e" stroke-width="1.400"/><path d="M7 209.500l4-3.500l4 3.500l-4 3.500z" fill="#8e8e8e"/>
<path d="M3 231.500h16M7 227l8 8.500M15 227l-8 8.500" stroke="#8e8e8e" stroke-width="1.400"/>
<path d="M2 244.5h19" stroke="#a0a0a0"/><path d="M2 245.5h19" stroke="#fff"/>
<circle cx="11" cy="259" r="3.500" fill="none" stroke="#8e8e8e"/><path d="M6 265.500h10" stroke="#8e8e8e" stroke-width="1.500" stroke-dasharray="2 1.500"/>
<path d="M4 271v18M18 271v18" stroke="#8e8e8e" stroke-dasharray="2 1.500" stroke-width="1.500"/><path d="M8 275l3-3l3 3zM8 285l3 3l3-3z" fill="#8e8e8e"/><path d="M11 274v12" stroke="#8e8e8e" stroke-width="1.500"/><circle cx="7" cy="280" r="1.500" fill="#8e8e8e"/><circle cx="15" cy="280" r="1.500" fill="#8e8e8e"/>
<path d="M2 294.5h19" stroke="#a0a0a0"/><path d="M2 295.5h19" stroke="#fff"/>
<rect x="3.500" y="302.500" width="15" height="13" fill="#fff" stroke="#000" stroke-width="1.200"/><circle cx="6" cy="309" r="1.500" fill="#00c000"/><circle cx="16" cy="309" r="1.500" fill="#e00000"/>
<path d="M7 330v-3a4 4 0 0 1 8 0v3" fill="none" stroke="#000" stroke-width="2"/><rect x="5" y="329" width="12" height="8" rx="1" fill="#000"/>
<path d="M2 344.5h19" stroke="#a0a0a0"/><path d="M2 345.5h19" stroke="#fff"/>
<path d="M5 357h6v-5h6" fill="none" stroke="#0000c0" stroke-width="2"/><circle cx="5" cy="357.500" r="1.800" fill="#e00000"/><circle cx="17" cy="352.500" r="1.800" fill="#00c000" stroke="#000" stroke-width=".5"/><text x="2.500" y="366.500" font-size="6.500" font-weight="bold" fill="#000" textLength="15.500" lengthAdjust="spacingAndGlyphs">NET</text>
<rect x="3.500" y="373.500" width="15" height="14" fill="#fff" stroke="#000" stroke-width="1.200"/><path d="M5 383h6v-5h6" fill="none" stroke="#0000c0" stroke-width="2"/><circle cx="5.500" cy="383" r="1.600" fill="#e00000"/><circle cx="16.500" cy="378" r="1.600" fill="#00c000"/>
<path d="M2 394.5h19" stroke="#a0a0a0"/><path d="M2 395.5h19" stroke="#fff"/>
<rect x="3.500" y="401.500" width="15" height="14" fill="#fff" stroke="#000" stroke-width="1.200"/><path d="M6 412c-3-6 3-8 5-4c2-4 8-2 5 4M6 412c3 2 7 2 10 0M8 405l6 8M14 405l-6 8" fill="none" stroke="#000" stroke-width="1.100"/>
<path d="M3 423.500h16M3 426.500h16M5 429.500h12M3 432.500h16M3 435.500h16M5 438.500h12" stroke="#b8b8b8"/><path d="M6 425h10M11 425v13M8 438h6" stroke="#a8a8a8" stroke-width="1.500"/>
<rect x="3.500" y="445.500" width="15" height="14" fill="#fff" stroke="#000" stroke-width="1.200"/><path d="M4 452.500h14" stroke="#000"/><rect x="7" y="449" width="3" height="3" fill="#000"/><rect x="7" y="454" width="3" height="3" fill="#0020ff"/><rect x="12" y="449" width="2.500" height="8" fill="#0020ff"/>
<path d="M2 466.5h19" stroke="#a0a0a0"/><path d="M2 467.5h19" stroke="#fff"/>
<rect x="3.500" y="473.500" width="15" height="14" fill="#fff" stroke="#000" stroke-width="1.200"/><path d="M4 474l14 13M18 474l-14 13" stroke="#000" stroke-width="1"/><path d="M7 475l9 11" stroke="#00c820" stroke-width="2.600"/><path d="M14 476l3-2" stroke="#000" stroke-width="2"/>
<path d="M0 492.500h23" stroke="#c8c8c8"/></svg>

<!-- bottom black -->
<div class="a" style="left:0;top:1038px;width:23px;height:1px;background:#a8a8a8"></div><div class="a" style="left:0;top:1040px;width:1920px;height:2px;background:#0c0c0c"></div>
<svg class="a" style="left:0;top:0" width="1920" height="1042" viewBox="0 0 1920 1042">
<defs><path id="gr" d="M290 0h1M299 0h1M308 0h1M317 0h1M326 0h1M335 0h1M344 0h1M353 0h1M362 0h1M371 0h1M379 0h1M388 0h1M397 0h1M406 0h1M415 0h1M424 0h1M433 0h1M442 0h1M451 0h1M460 0h1M469 0h1M478 0h1M487 0h1M496 0h1M505 0h1M514 0h1M523 0h1M532 0h1M540 0h1M549 0h1M558 0h1M567 0h1M576 0h1M585 0h1M594 0h1M603 0h1M612 0h1M621 0h1M630 0h1M639 0h1M648 0h1M657 0h1M666 0h1M675 0h1M684 0h1M692 0h1M701 0h1M710 0h1M719 0h1M728 0h1M737 0h1M746 0h1M755 0h1M764 0h1M773 0h1M782 0h1M791 0h1M800 0h1M809 0h1M818 0h1M827 0h1M836 0h1M845 0h1M853 0h1M862 0h1M871 0h1M880 0h1M889 0h1M898 0h1M907 0h1M916 0h1M925 0h1M934 0h1M943 0h1M952 0h1M961 0h1M970 0h1M979 0h1M988 0h1M997 0h1M1006 0h1M1014 0h1M1023 0h1M1032 0h1M1041 0h1M1050 0h1M1059 0h1M1068 0h1M1077 0h1M1086 0h1M1095 0h1M1104 0h1M1113 0h1M1122 0h1M1131 0h1M1140 0h1M1149 0h1M1158 0h1M1166 0h1M1175 0h1M1184 0h1M1193 0h1M1202 0h1M1211 0h1M1220 0h1M1229 0h1M1238 0h1M1247 0h1M1256 0h1M1265 0h1M1274 0h1M1283 0h1M1292 0h1M1301 0h1M1310 0h1M1319 0h1M1327 0h1M1336 0h1M1345 0h1M1354 0h1M1363 0h1M1372 0h1M1381 0h1M1390 0h1M1399 0h1M1408 0h1M1417 0h1M1426 0h1M1435 0h1M1444 0h1M1453 0h1M1462 0h1M1471 0h1M1479 0h1M1488 0h1M1497 0h1M1506 0h1M1515 0h1M1524 0h1M1533 0h1M1542 0h1M1551 0h1M1560 0h1M1569 0h1M1578 0h1M1587 0h1M1596 0h1M1605 0h1M1614 0h1M1623 0h1M1632 0h1M1640 0h1M1649 0h1M1658 0h1M1667 0h1M1676 0h1M1685 0h1M1694 0h1M1703 0h1" stroke="#848484" stroke-width="1" shape-rendering="crispEdges"/><radialGradient id="bulbg" cx="0.4" cy="0.3" r="0.8"><stop offset="0" stop-color="#fff6b0"/><stop offset="0.45" stop-color="#f8b850"/><stop offset="1" stop-color="#e06848"/></radialGradient><clipPath id="cv"><rect x="287" y="99" width="1422" height="692"/></clipPath></defs>
<g clip-path="url(#cv)"><use href="#gr" y="100.5"/><use href="#gr" y="109.5"/><use href="#gr" y="118.5"/><use href="#gr" y="127.5"/><use href="#gr" y="136.5"/><use href="#gr" y="145.5"/><use href="#gr" y="154.5"/><use href="#gr" y="163.5"/><use href="#gr" y="172.5"/><use href="#gr" y="181.5"/><use href="#gr" y="190.5"/><use href="#gr" y="198.5"/><use href="#gr" y="207.5"/><use href="#gr" y="216.5"/><use href="#gr" y="225.5"/><use href="#gr" y="234.5"/><use href="#gr" y="243.5"/><use href="#gr" y="252.5"/><use href="#gr" y="261.5"/><use href="#gr" y="270.5"/><use href="#gr" y="279.5"/><use href="#gr" y="288.5"/><use href="#gr" y="297.5"/><use href="#gr" y="306.5"/><use href="#gr" y="315.5"/><use href="#gr" y="324.5"/><use href="#gr" y="333.5"/><use href="#gr" y="342.5"/><use href="#gr" y="351.5"/><use href="#gr" y="359.5"/><use href="#gr" y="368.5"/><use href="#gr" y="377.5"/><use href="#gr" y="386.5"/><use href="#gr" y="395.5"/><use href="#gr" y="404.5"/><use href="#gr" y="413.5"/><use href="#gr" y="422.5"/><use href="#gr" y="431.5"/><use href="#gr" y="440.5"/><use href="#gr" y="449.5"/><use href="#gr" y="458.5"/><use href="#gr" y="467.5"/><use href="#gr" y="476.5"/><use href="#gr" y="485.5"/><use href="#gr" y="494.5"/><use href="#gr" y="503.5"/><use href="#gr" y="511.5"/><use href="#gr" y="520.5"/><use href="#gr" y="529.5"/><use href="#gr" y="538.5"/><use href="#gr" y="547.5"/><use href="#gr" y="556.5"/><use href="#gr" y="565.5"/><use href="#gr" y="574.5"/><use href="#gr" y="583.5"/><use href="#gr" y="592.5"/><use href="#gr" y="601.5"/><use href="#gr" y="610.5"/><use href="#gr" y="619.5"/><use href="#gr" y="628.5"/><use href="#gr" y="637.5"/><use href="#gr" y="646.5"/><use href="#gr" y="655.5"/><use href="#gr" y="664.5"/><use href="#gr" y="672.5"/><use href="#gr" y="681.5"/><use href="#gr" y="690.5"/><use href="#gr" y="699.5"/><use href="#gr" y="708.5"/><use href="#gr" y="717.5"/><use href="#gr" y="726.5"/><use href="#gr" y="735.5"/><use href="#gr" y="744.5"/><use href="#gr" y="753.5"/><use href="#gr" y="762.5"/><use href="#gr" y="771.5"/><use href="#gr" y="780.5"/><use href="#gr" y="789.5"/>
<polyline points="554.2,235 554.2,669" fill="none" stroke="#006868" stroke-width="3.8" stroke-linejoin="miter"/>
<polyline points="554.2,235 554.2,669" fill="none" stroke="#38f0ff" stroke-width="1.9" stroke-linejoin="miter"/>
<polyline points="552.5,241.1 726.2,241.1 726.2,294" fill="none" stroke="#006868" stroke-width="3.8" stroke-linejoin="miter"/>
<polyline points="552.5,241.1 726.2,241.1 726.2,294" fill="none" stroke="#38f0ff" stroke-width="1.9" stroke-linejoin="miter"/>
<polyline points="714.5,273 726,273" fill="none" stroke="#006868" stroke-width="3.4" stroke-linejoin="miter"/>
<polyline points="714.5,273 726,273" fill="none" stroke="#38f0ff" stroke-width="1.6" stroke-linejoin="miter"/>
<polyline points="586.2,235 586.2,247.5 582.3,249.5 582.3,581.2 608,581.2" fill="none" stroke="#004850" stroke-width="3.8" stroke-linejoin="miter"/>
<polyline points="586.2,235 586.2,247.5 582.3,249.5 582.3,581.2 608,581.2" fill="none" stroke="#00b4c4" stroke-width="1.9" stroke-linejoin="miter"/>
<polyline points="661,581.2 684.4,581.2" fill="none" stroke="#004850" stroke-width="3.8" stroke-linejoin="miter"/>
<polyline points="661,581.2 684.4,581.2" fill="none" stroke="#00b4c4" stroke-width="1.9" stroke-linejoin="miter"/>
<polyline points="586.2,581.2 586.2,669" fill="none" stroke="#004850" stroke-width="3.8" stroke-linejoin="miter"/>
<polyline points="586.2,581.2 586.2,669" fill="none" stroke="#00b4c4" stroke-width="1.9" stroke-linejoin="miter"/>
<polyline points="691,493.7 684.4,493.7 684.4,638.9 727,638.9" fill="none" stroke="#004850" stroke-width="3.8" stroke-linejoin="miter"/>
<polyline points="691,493.7 684.4,493.7 684.4,638.9 727,638.9" fill="none" stroke="#00b4c4" stroke-width="1.9" stroke-linejoin="miter"/>
<polyline points="809.4,294 809.4,248.6 1433.1,248.6" fill="none" stroke="#4a2800" stroke-width="3.8" stroke-linejoin="miter"/>
<polyline points="809.4,294 809.4,248.6 1433.1,248.6" fill="none" stroke="#b86000" stroke-width="1.9" stroke-linejoin="miter"/>
<polyline points="809.4,273 822,273" fill="none" stroke="#4a2800" stroke-width="3.4" stroke-linejoin="miter"/>
<polyline points="809.4,273 822,273" fill="none" stroke="#b86000" stroke-width="1.6" stroke-linejoin="miter"/>
<polyline points="809.4,511 809.4,518" fill="none" stroke="#70003a" stroke-width="3.8" stroke-linejoin="miter"/>
<polyline points="809.4,511 809.4,518" fill="none" stroke="#ff107c" stroke-width="1.9" stroke-linejoin="miter"/>
<polyline points="785.2,611 785.2,518 893,518 893,652 1417,652" fill="none" stroke="#70003a" stroke-width="3.8" stroke-linejoin="miter"/>
<polyline points="785.2,611 785.2,518 893,518 893,652 1417,652" fill="none" stroke="#ff107c" stroke-width="1.9" stroke-linejoin="miter"/>
<polyline points="726.4,316.5 726.4,322" fill="none" stroke="#000" stroke-width="1" shape-rendering="crispEdges"/>
<polyline points="726.4,322 726.4,339.5" fill="none" stroke="#4a2800" stroke-width="3.4" stroke-linejoin="miter"/>
<polyline points="726.4,322 726.4,339.5" fill="none" stroke="#b86000" stroke-width="1.6" stroke-linejoin="miter"/>
<polyline points="809.4,316.5 809.4,322" fill="none" stroke="#000" stroke-width="1" shape-rendering="crispEdges"/>
<polyline points="809.4,322 809.4,339.5" fill="none" stroke="#4a2800" stroke-width="3.4" stroke-linejoin="miter"/>
<polyline points="809.4,322 809.4,339.5" fill="none" stroke="#b86000" stroke-width="1.6" stroke-linejoin="miter"/>
<polyline points="728,397 728,434" fill="none" stroke="#4a2800" stroke-width="3.6" stroke-linejoin="miter"/>
<polyline points="728,397 728,434" fill="none" stroke="#b86000" stroke-width="1.8" stroke-linejoin="miter"/>
<polyline points="728,405.8 714.4,405.8" fill="none" stroke="#4a2800" stroke-width="3.6" stroke-linejoin="miter"/>
<polyline points="728,405.8 714.4,405.8" fill="none" stroke="#b86000" stroke-width="1.8" stroke-linejoin="miter"/>
<polyline points="728,434 728,440" fill="none" stroke="#000" stroke-width="1" shape-rendering="crispEdges"/>
<polyline points="728,457.5 728,463.5" fill="none" stroke="#000" stroke-width="1" shape-rendering="crispEdges"/>
<polyline points="728,463.5 728,476" fill="none" stroke="#4a2800" stroke-width="3.4" stroke-linejoin="miter"/>
<polyline points="728,463.5 728,476" fill="none" stroke="#b86000" stroke-width="1.6" stroke-linejoin="miter"/>
<polyline points="809.4,397 809.4,434" fill="none" stroke="#4a2800" stroke-width="3.6" stroke-linejoin="miter"/>
<polyline points="809.4,397 809.4,434" fill="none" stroke="#b86000" stroke-width="1.8" stroke-linejoin="miter"/>
<polyline points="809.4,405.8 832.5,405.8" fill="none" stroke="#4a2800" stroke-width="3.6" stroke-linejoin="miter"/>
<polyline points="809.4,405.8 832.5,405.8" fill="none" stroke="#b86000" stroke-width="1.8" stroke-linejoin="miter"/>
<polyline points="809.4,434 809.4,440" fill="none" stroke="#000" stroke-width="1" shape-rendering="crispEdges"/>
<polyline points="809.4,457.5 809.4,463.5" fill="none" stroke="#000" stroke-width="1" shape-rendering="crispEdges"/>
<polyline points="809.4,463.5 809.4,476" fill="none" stroke="#4a2800" stroke-width="3.4" stroke-linejoin="miter"/>
<polyline points="809.4,463.5 809.4,476" fill="none" stroke="#b86000" stroke-width="1.6" stroke-linejoin="miter"/>
<polyline points="710,372 683,372 681.3,374 681.3,389.5" fill="none" stroke="#101060" stroke-width="3.6" stroke-linejoin="miter"/>
<polyline points="710,372 683,372 681.3,374 681.3,389.5" fill="none" stroke="#4848ff" stroke-width="1.8" stroke-linejoin="miter"/>
<polyline points="827.5,373 862.5,373 864.4,375 864.4,389.5" fill="none" stroke="#101060" stroke-width="3.6" stroke-linejoin="miter"/>
<polyline points="827.5,373 862.5,373 864.4,375 864.4,389.5" fill="none" stroke="#4848ff" stroke-width="1.8" stroke-linejoin="miter"/>
<path d="M493 143.3C493 133.3 501 131.3 525 131.3L583 131.3C607 131.3 615 133.3 615 143.3L615 160C615 170 607 172 583 172L525 172C501 172 493 170 493 160Z" fill="#4d4d4d" stroke="#222" stroke-width="1"/>
<text x="530" y="156.02" font-size="13.6" fill="#fff" textLength="45.5" lengthAdjust="spacingAndGlyphs">RF Tire</text>
<path d="M1381.3 143.3C1381.3 133.3 1389.3 131.3 1413.3 131.3L1471 131.3C1495 131.3 1503 133.3 1503 143.3L1503 160C1503 170 1495 172 1471 172L1413.3 172C1389.3 172 1381.3 170 1381.3 160Z" fill="#4d4d4d" stroke="#222" stroke-width="1"/>
<text x="1418" y="156.02" font-size="13.6" fill="#fff" textLength="46.5" lengthAdjust="spacingAndGlyphs">RR Tire</text>
<path d="M493 745C493 735 501 733 525 733L583 733C607 733 615 735 615 745L615 761.8C615 771.8 607 773.8 583 773.8L525 773.8C501 773.8 493 771.8 493 761.8Z" fill="#4d4d4d" stroke="#222" stroke-width="1"/>
<text x="531.5" y="757.77" font-size="13.6" fill="#fff" textLength="44.1" lengthAdjust="spacingAndGlyphs">LF Tire</text>
<path d="M1381.3 745.5C1381.3 735.5 1389.3 733.5 1413.3 733.5L1471 733.5C1495 733.5 1503 735.5 1503 745.5L1503 761.8C1503 771.8 1495 773.8 1471 773.8L1413.3 773.8C1389.3 773.8 1381.3 771.8 1381.3 761.8Z" fill="#4d4d4d" stroke="#222" stroke-width="1"/>
<text x="1418.5" y="758.02" font-size="13.6" fill="#fff" textLength="45" lengthAdjust="spacingAndGlyphs">LR Tire</text>
<rect x="509.5" y="172.5" width="89" height="17.5" fill="#74006e" stroke="#200020" stroke-width="1"/>
<text x="531" y="184.78" font-size="9.3" font-weight="bold" fill="#fff" textLength="45" lengthAdjust="spacingAndGlyphs">RF Wheel</text>
<rect x="1397.5" y="172.5" width="88" height="17.5" fill="#74006e" stroke="#200020" stroke-width="1"/>
<text x="1418" y="184.78" font-size="9.3" font-weight="bold" fill="#fff" textLength="46.5" lengthAdjust="spacingAndGlyphs">RR Wheel</text>
<rect x="509.5" y="715.5" width="89.2" height="16" fill="#74006e" stroke="#200020" stroke-width="1"/>
<text x="532.5" y="727.03" font-size="9.3" font-weight="bold" fill="#fff" textLength="44" lengthAdjust="spacingAndGlyphs">LF Wheel</text>
<rect x="1397.5" y="715.5" width="88" height="15.9" fill="#74006e" stroke="#200020" stroke-width="1"/>
<text x="1418.5" y="726.98" font-size="9.3" font-weight="bold" fill="#fff" textLength="45" lengthAdjust="spacingAndGlyphs">LR Wheel</text>
<rect x="506.5" y="190.5" width="96" height="45" fill="#b4ecff" stroke="#000" stroke-width="1"/>
<text x="515" y="218.13" font-size="13.5" font-weight="bold" fill="#000" textLength="78.7" lengthAdjust="spacingAndGlyphs">RF Disc Assy</text>
<rect x="1392.5" y="190.5" width="96.2" height="45" fill="#b4ecff" stroke="#000" stroke-width="1"/>
<text x="1400" y="218.13" font-size="13.5" font-weight="bold" fill="#000" textLength="78" lengthAdjust="spacingAndGlyphs">RR Disc Assy</text>
<rect x="506.5" y="668.5" width="96" height="45" fill="#b4ecff" stroke="#000" stroke-width="1"/>
<text x="515.6" y="696.13" font-size="13.5" font-weight="bold" fill="#000" textLength="76.9" lengthAdjust="spacingAndGlyphs">LF Disc Assy</text>
<rect x="1392.5" y="668.5" width="96.2" height="45" fill="#b4ecff" stroke="#000" stroke-width="1"/>
<text x="1401" y="696.13" font-size="13.5" font-weight="bold" fill="#000" textLength="78" lengthAdjust="spacingAndGlyphs">LR Disc Assy</text>
<polygon points="629.5,151.5 640.5,140.5 749.5,140.5 760.5,151.5 749.5,162.5 640.5,162.5" fill="#ffe0b8" stroke="#000" stroke-width="1"/>
<text x="640" y="155.58" font-size="12.8" font-weight="bold" fill="#000" textLength="109.5" lengthAdjust="spacingAndGlyphs">RF Wheel Torque</text>
<polygon points="1236.3,151.5 1247.3,140.5 1356,140.5 1367,151.5 1356,162.5 1247.3,162.5" fill="#ffe0b8" stroke="#000" stroke-width="1"/>
<text x="1246" y="155.58" font-size="12.8" font-weight="bold" fill="#000" textLength="110" lengthAdjust="spacingAndGlyphs">RR Wheel Torque</text>
<polygon points="629.5,753.1 640.1,742.5 749.9,742.5 760.5,753.1 749.9,763.7 640.1,763.7" fill="#ffe0b8" stroke="#000" stroke-width="1"/>
<text x="641.3" y="757.18" font-size="12.8" font-weight="bold" fill="#000" textLength="108.7" lengthAdjust="spacingAndGlyphs">LF Wheel Torque</text>
<polygon points="1235.5,753 1246.2,742.3 1356.8,742.3 1367.5,753 1356.8,763.7 1246.2,763.7" fill="#ffe0b8" stroke="#000" stroke-width="1"/>
<text x="1246.3" y="757.08" font-size="12.8" font-weight="bold" fill="#000" textLength="109" lengthAdjust="spacingAndGlyphs">LR Wheel Torque</text>
<polyline points="614.8,151.7 629.8,151.7" fill="none" stroke="#000" stroke-width="1" shape-rendering="crispEdges"/>
<polygon points="617.3,151.7 621.3,149.1 621.3,154.3" fill="#000"/>
<polygon points="627.3,151.7 623.3,149.1 623.3,154.3" fill="#000"/>
<polyline points="1366.7,151.7 1381.7,151.7" fill="none" stroke="#000" stroke-width="1" shape-rendering="crispEdges"/>
<polygon points="1369.2,151.7 1373.2,149.1 1373.2,154.3" fill="#000"/>
<polygon points="1379.2,151.7 1375.2,149.1 1375.2,154.3" fill="#000"/>
<polyline points="614.8,753.2 629.8,753.2" fill="none" stroke="#000" stroke-width="1" shape-rendering="crispEdges"/>
<polygon points="617.3,753.2 621.3,750.6 621.3,755.8" fill="#000"/>
<polygon points="627.3,753.2 623.3,750.6 623.3,755.8" fill="#000"/>
<polyline points="1366.9,753.2 1381.9,753.2" fill="none" stroke="#000" stroke-width="1" shape-rendering="crispEdges"/>
<polygon points="1369.4,753.2 1373.4,750.6 1373.4,755.8" fill="#000"/>
<polygon points="1379.4,753.2 1375.4,750.6 1375.4,755.8" fill="#000"/>
<polygon points="627.5,207 733,207 747,213.8 733,220.6 627.5,220.6" fill="#40ffff" stroke="#000" stroke-width="1"/>
<text x="633" y="217.85" font-size="13" font-weight="bold" fill="#000" textLength="108" lengthAdjust="spacingAndGlyphs">RF Pad Squealer</text>
<polygon points="625.6,693.7 732,693.7 746,700.85 732,708 625.6,708" fill="#40ffff" stroke="#000" stroke-width="1"/>
<text x="632.7" y="704.9" font-size="13" font-weight="bold" fill="#000" textLength="107.8" lengthAdjust="spacingAndGlyphs">LF Pad Squealer</text>
<polygon points="1341.3,207 1222.7,207 1208.7,213.8 1222.7,220.6 1341.3,220.6" fill="#40ffff" stroke="#000" stroke-width="1"/>
<text x="1220.5" y="217.85" font-size="13" font-weight="bold" fill="#000" textLength="108.2" lengthAdjust="spacingAndGlyphs">RR Pad Squealer</text>
<polygon points="1345.3,693.4 1227.3,693.4 1213.3,700.85 1227.3,708.3 1345.3,708.3" fill="#40ffff" stroke="#000" stroke-width="1"/>
<text x="1225" y="704.9" font-size="13" font-weight="bold" fill="#000" textLength="107" lengthAdjust="spacingAndGlyphs">LR Pad Squealer</text>
<polyline points="602.5,213.8 627.5,213.8" fill="none" stroke="#000" stroke-width="1" shape-rendering="crispEdges"/>
<polygon points="619,213.8 615.4,211.5 615.4,216.1" fill="#000"/>
<polyline points="602.5,700.4 625.6,700.4" fill="none" stroke="#000" stroke-width="1" shape-rendering="crispEdges"/>
<polygon points="619,700.4 615.4,698.1 615.4,702.7" fill="#000"/>
<polyline points="1341.3,213.8 1392.5,213.8" fill="none" stroke="#000" stroke-width="1" shape-rendering="crispEdges"/>
<polygon points="1361.5,213.8 1365.1,211.5 1365.1,216.1" fill="#000"/>
<polyline points="1345.3,700.5 1392.5,700.5" fill="none" stroke="#000" stroke-width="1" shape-rendering="crispEdges"/>
<polygon points="1364.5,700.5 1368.1,698.2 1368.1,702.8" fill="#000"/>
<polyline points="602.5,194.6 611.5,194.6" fill="none" stroke="#000" stroke-width="1" shape-rendering="crispEdges"/>
<polyline points="611.5,193.6 610.5,196.8" fill="none" stroke="#000" stroke-width="1"/>
<text x="612.3" y="196.39" font-size="3.6" font-weight="bold" fill="#223" textLength="27" lengthAdjust="spacingAndGlyphs">RF INLET SOL</text>
<polyline points="602.5,203.4 611.5,203.4" fill="none" stroke="#000" stroke-width="1" shape-rendering="crispEdges"/>
<polyline points="611.5,202.4 610.5,205.6" fill="none" stroke="#000" stroke-width="1"/>
<text x="612.3" y="205.19" font-size="3.6" font-weight="bold" fill="#223" textLength="29.25" lengthAdjust="spacingAndGlyphs">RF OUTLET SOL</text>
<polyline points="602.5,222 611.5,222" fill="none" stroke="#000" stroke-width="1" shape-rendering="crispEdges"/>
<polyline points="611.5,221 610.5,224.2" fill="none" stroke="#000" stroke-width="1"/>
<text x="612.3" y="223.79" font-size="3.6" font-weight="bold" fill="#223" textLength="13.5" lengthAdjust="spacingAndGlyphs">RF SS+</text>
<polyline points="602.5,230.6 611.5,230.6" fill="none" stroke="#000" stroke-width="1" shape-rendering="crispEdges"/>
<polyline points="611.5,229.6 610.5,232.8" fill="none" stroke="#000" stroke-width="1"/>
<text x="612.3" y="232.39" font-size="3.6" font-weight="bold" fill="#223" textLength="13.5" lengthAdjust="spacingAndGlyphs">RF SS-</text>
<polyline points="602.5,673 611.5,673" fill="none" stroke="#000" stroke-width="1" shape-rendering="crispEdges"/>
<polyline points="611.5,672 610.5,675.2" fill="none" stroke="#000" stroke-width="1"/>
<text x="612.3" y="674.79" font-size="3.6" font-weight="bold" fill="#223" textLength="13.5" lengthAdjust="spacingAndGlyphs">LF SS-</text>
<polyline points="602.5,681.3 611.5,681.3" fill="none" stroke="#000" stroke-width="1" shape-rendering="crispEdges"/>
<polyline points="611.5,680.3 610.5,683.5" fill="none" stroke="#000" stroke-width="1"/>
<text x="612.3" y="683.09" font-size="3.6" font-weight="bold" fill="#223" textLength="13.5" lengthAdjust="spacingAndGlyphs">LF SS+</text>
<polyline points="602.5,691 611.5,691" fill="none" stroke="#000" stroke-width="1" shape-rendering="crispEdges"/>
<polyline points="611.5,690 610.5,693.2" fill="none" stroke="#000" stroke-width="1"/>
<text x="612.3" y="692.79" font-size="3.6" font-weight="bold" fill="#223" textLength="29.25" lengthAdjust="spacingAndGlyphs">LF OUTLET SOL</text>
<polyline points="602.5,709.7 611.5,709.7" fill="none" stroke="#000" stroke-width="1" shape-rendering="crispEdges"/>
<polyline points="611.5,708.7 610.5,711.9" fill="none" stroke="#000" stroke-width="1"/>
<text x="612.3" y="711.49" font-size="3.6" font-weight="bold" fill="#223" textLength="27" lengthAdjust="spacingAndGlyphs">LF INLET SOL</text>
<polyline points="1392.5,194.6 1383.5,194.6" fill="none" stroke="#000" stroke-width="1" shape-rendering="crispEdges"/>
<polyline points="1383.5,193.6 1382.5,196.8" fill="none" stroke="#000" stroke-width="1"/>
<text x="1355" y="196.39" font-size="3.6" font-weight="bold" fill="#223" textLength="27" lengthAdjust="spacingAndGlyphs">RR INLET SOL</text>
<polyline points="1392.5,203.4 1383.5,203.4" fill="none" stroke="#000" stroke-width="1" shape-rendering="crispEdges"/>
<polyline points="1383.5,202.4 1382.5,205.6" fill="none" stroke="#000" stroke-width="1"/>
<text x="1352.75" y="205.19" font-size="3.6" font-weight="bold" fill="#223" textLength="29.25" lengthAdjust="spacingAndGlyphs">RR OUTLET SOL</text>
<polyline points="1392.5,222 1383.5,222" fill="none" stroke="#000" stroke-width="1" shape-rendering="crispEdges"/>
<polyline points="1383.5,221 1382.5,224.2" fill="none" stroke="#000" stroke-width="1"/>
<text x="1368.5" y="223.79" font-size="3.6" font-weight="bold" fill="#223" textLength="13.5" lengthAdjust="spacingAndGlyphs">RR SS+</text>
<polyline points="1392.5,230.6 1383.5,230.6" fill="none" stroke="#000" stroke-width="1" shape-rendering="crispEdges"/>
<polyline points="1383.5,229.6 1382.5,232.8" fill="none" stroke="#000" stroke-width="1"/>
<text x="1368.5" y="232.39" font-size="3.6" font-weight="bold" fill="#223" textLength="13.5" lengthAdjust="spacingAndGlyphs">RR SS-</text>
<polyline points="1392.5,673.3 1383.5,673.3" fill="none" stroke="#000" stroke-width="1" shape-rendering="crispEdges"/>
<polyline points="1383.5,672.3 1382.5,675.5" fill="none" stroke="#000" stroke-width="1"/>
<text x="1368.5" y="675.09" font-size="3.6" font-weight="bold" fill="#223" textLength="13.5" lengthAdjust="spacingAndGlyphs">LR SS-</text>
<polyline points="1392.5,681.3 1383.5,681.3" fill="none" stroke="#000" stroke-width="1" shape-rendering="crispEdges"/>
<polyline points="1383.5,680.3 1382.5,683.5" fill="none" stroke="#000" stroke-width="1"/>
<text x="1368.5" y="683.09" font-size="3.6" font-weight="bold" fill="#223" textLength="13.5" lengthAdjust="spacingAndGlyphs">LR SS+</text>
<polyline points="1392.5,690.8 1383.5,690.8" fill="none" stroke="#000" stroke-width="1" shape-rendering="crispEdges"/>
<polyline points="1383.5,689.8 1382.5,693" fill="none" stroke="#000" stroke-width="1"/>
<text x="1352.75" y="692.59" font-size="3.6" font-weight="bold" fill="#223" textLength="29.25" lengthAdjust="spacingAndGlyphs">LR OUTLET SOL</text>
<polyline points="1392.5,709.2 1383.5,709.2" fill="none" stroke="#000" stroke-width="1" shape-rendering="crispEdges"/>
<polyline points="1383.5,708.2 1382.5,711.4" fill="none" stroke="#000" stroke-width="1"/>
<text x="1355" y="710.99" font-size="3.6" font-weight="bold" fill="#223" textLength="27" lengthAdjust="spacingAndGlyphs">LR INLET SOL</text>
<polyline points="522.5,235.5 522.5,245.5 520.5,247" fill="none" stroke="#000" stroke-width="1"/>
<polyline points="1400.7,235.5 1400.7,245.5" fill="none" stroke="#000" stroke-width="1" shape-rendering="crispEdges"/>
<polyline points="522.5,668.5 522.5,659.6 520.5,660.6" fill="none" stroke="#000" stroke-width="1"/>
<polyline points="1404.7,668.5 1404.7,659.7 1406.5,659.7" fill="none" stroke="#000" stroke-width="1" shape-rendering="crispEdges"/>
<rect x="630.3" y="232.4" width="53.4" height="17.2" fill="#ffe0b8" stroke="#000" stroke-width="1"/>
<text x="633" y="245.64" font-size="12.4" fill="#000" textLength="48" lengthAdjust="spacingAndGlyphs" stroke="#000" stroke-width="0.35">FR Line</text>
<rect x="1129.3" y="239.5" width="52.4" height="17.3" fill="#ffe0b8" stroke="#000" stroke-width="1"/>
<text x="1131" y="252.79" font-size="12.4" fill="#000" textLength="48.5" lengthAdjust="spacingAndGlyphs" stroke="#000" stroke-width="0.35">RR Line</text>
<rect x="608.2" y="572.3" width="52.8" height="17.5" fill="#ffe0b8" stroke="#000" stroke-width="1"/>
<text x="610.8" y="585.69" font-size="12.4" fill="#000" textLength="47.7" lengthAdjust="spacingAndGlyphs" stroke="#000" stroke-width="0.35">FS Line</text>
<rect x="1164.4" y="643.4" width="53.3" height="17.4" fill="#ffe0b8" stroke="#000" stroke-width="1"/>
<text x="1166.5" y="656.74" font-size="12.4" fill="#000" textLength="48.9" lengthAdjust="spacingAndGlyphs" stroke="#000" stroke-width="0.35">RS Line</text>
<polyline points="616,239.2 618,241 616,242.8" fill="none" stroke="#000" stroke-width="0.8"/>
<polyline points="707,239.2 709,241 707,242.8" fill="none" stroke="#000" stroke-width="0.8"/>
<polyline points="593,579.2 595,581 593,582.8" fill="none" stroke="#000" stroke-width="0.8"/>
<polyline points="671,579.2 673,581 671,582.8" fill="none" stroke="#000" stroke-width="0.8"/>
<path d="M841.200 122.500C843 119 870 116.400 905 116.400L1095 116.400C1130 116.400 1156.500 119 1158.600 122.500L1158.600 146.200C1156.500 150 1130 152.500 1095 152.500L905 152.500C870 152.500 843 150 841.200 146.200Z" fill="#ffb4b4" stroke="#000" stroke-width="1"/>
<text x="917.5" y="140.6" font-size="17.6" font-weight="bold" fill="#000" textLength="163.2" lengthAdjust="spacingAndGlyphs">BRAKING SYSTEM</text>
<rect x="637.5" y="257.3" width="76.9" height="33.3" fill="#ffc000" stroke="#000" stroke-width="1" rx="19.65" ry="16.65"/>
<text x="663" y="270.83" font-size="9.3" font-weight="bold" fill="#000" textLength="25" lengthAdjust="spacingAndGlyphs">Front</text>
<text x="645.5" y="282.93" font-size="9.3" font-weight="bold" fill="#000" textLength="61.5" lengthAdjust="spacingAndGlyphs">Accumulator</text>
<rect x="822.5" y="257.3" width="76.9" height="33.3" fill="#ffc000" stroke="#000" stroke-width="1" rx="19.65" ry="16.65"/>
<text x="849.5" y="270.83" font-size="9.3" font-weight="bold" fill="#000" textLength="22" lengthAdjust="spacingAndGlyphs">Rear</text>
<text x="830.5" y="282.93" font-size="9.3" font-weight="bold" fill="#000" textLength="61.5" lengthAdjust="spacingAndGlyphs">Accumulator</text>
<polyline points="726.2,294 726.2,299" fill="none" stroke="#000" stroke-width="1" shape-rendering="crispEdges"/>
<polyline points="809.4,294 809.4,299" fill="none" stroke="#000" stroke-width="1" shape-rendering="crispEdges"/>
<polyline points="716.3,308.8 726.3,298.8 736.3,308.8" fill="none" stroke="#000" stroke-width="1"/>
<circle cx="726.3" cy="308.8" r="7.4" fill="#ffdfc0" stroke="#000" stroke-width="1"/>
<text x="675.6" y="311.85" font-size="13" font-weight="bold" fill="#000" textLength="36.3" lengthAdjust="spacingAndGlyphs">CKV 1</text>
<polyline points="799.6,308.8 809.6,298.8 819.6,308.8" fill="none" stroke="#000" stroke-width="1"/>
<circle cx="809.6" cy="308.8" r="7.4" fill="#ffdfc0" stroke="#000" stroke-width="1"/>
<text x="822" y="311.85" font-size="13" font-weight="bold" fill="#000" textLength="36.5" lengthAdjust="spacingAndGlyphs">CKV 3</text>
<polyline points="718.1,449.5 728.1,439.5 738.1,449.5" fill="none" stroke="#000" stroke-width="1"/>
<circle cx="728.1" cy="449.5" r="7.4" fill="#ffdfc0" stroke="#000" stroke-width="1"/>
<text x="677.3" y="452.55" font-size="13" font-weight="bold" fill="#000" textLength="37.7" lengthAdjust="spacingAndGlyphs">CKV 2</text>
<polyline points="799.4,447 809.4,437 819.4,447" fill="none" stroke="#000" stroke-width="1"/>
<circle cx="809.4" cy="447" r="7.4" fill="#ffdfc0" stroke="#000" stroke-width="1"/>
<text x="822.5" y="450.05" font-size="13" font-weight="bold" fill="#000" textLength="37.2" lengthAdjust="spacingAndGlyphs">CKV 4</text>
<rect x="724.8" y="339.3" width="5.4" height="12.4" fill="#fff" stroke="#000" stroke-width="1"/>
<rect x="724.8" y="385.7" width="5.4" height="11" fill="#fff" stroke="#000" stroke-width="1"/>
<circle cx="727.5" cy="368.7" r="17.8" fill="#b4f400" stroke="#000" stroke-width="1"/>
<path d="M714.3 370.7Q727.5 375.7 740.7 370.7L727.5 385.7Z" fill="#000" stroke="#000" stroke-width="0.5"/>
<text x="699.4" y="365.79" font-size="9.2" fill="#000" textLength="55" lengthAdjust="spacingAndGlyphs" stroke="#000" stroke-width="0.3">Front Pump</text>
<rect x="807.3" y="339.3" width="5.4" height="12.4" fill="#fff" stroke="#000" stroke-width="1"/>
<rect x="807.3" y="385.7" width="5.4" height="11" fill="#fff" stroke="#000" stroke-width="1"/>
<circle cx="810" cy="368.7" r="17.8" fill="#b4f400" stroke="#000" stroke-width="1"/>
<path d="M796.8 370.7Q810 375.7 823.2 370.7L810 385.7Z" fill="#000" stroke="#000" stroke-width="0.5"/>
<text x="782.5" y="365.79" font-size="9.2" fill="#000" textLength="53.1" lengthAdjust="spacingAndGlyphs" stroke="#000" stroke-width="0.3">Rear Pump</text>
<path d="M745.5 353.5L754.5 352.3L754.5 350.5L757.5 350.5L757.5 356.3L745.5 355.9Z" fill="#40e060" stroke="#063" stroke-width="0.7"/>
<text x="758.5" y="354.59" font-size="3.6" font-weight="bold" fill="#223" textLength="13" lengthAdjust="spacingAndGlyphs">CH GND</text>
<path d="M827.5 353.5L836.5 352.3L836.5 350.5L839.5 350.5L839.5 356.3L827.5 355.9Z" fill="#40e060" stroke="#063" stroke-width="0.7"/>
<text x="840.5" y="354.59" font-size="3.6" font-weight="bold" fill="#223" textLength="13" lengthAdjust="spacingAndGlyphs">CH GND</text>
<polyline points="745.3,365 750.5,365 751.5,367" fill="none" stroke="#000" stroke-width="1"/>
<text x="755" y="366.89" font-size="3.6" font-weight="bold" fill="#223" textLength="35" lengthAdjust="spacingAndGlyphs">14_Pump Drive Motor</text>
<polyline points="827.8,368.8 837,368.8" fill="none" stroke="#000" stroke-width="1" shape-rendering="crispEdges"/>
<text x="838" y="368.79" font-size="3.6" font-weight="bold" fill="#223" textLength="38" lengthAdjust="spacingAndGlyphs">14_Pump Drive Motor</text>
<rect x="661.5" y="389.4" width="34.1" height="32.2" fill="#c0d4f0" stroke="#000" stroke-width="1"/>
<circle cx="668.8" cy="400" r="3.3" fill="#fff" stroke="#000" stroke-width="0.9"/>
<circle cx="688.5" cy="400" r="3.3" fill="#fff" stroke="#000" stroke-width="0.9"/>
<circle cx="678" cy="416.3" r="3.3" fill="#fff" stroke="#000" stroke-width="0.9"/>
<polyline points="669.4,392.5 677.6,412.8" fill="none" stroke="#000" stroke-width="0.9"/>
<rect x="850.3" y="389.4" width="34.5" height="32.5" fill="#c0d4f0" stroke="#000" stroke-width="1"/>
<circle cx="857.5" cy="400" r="3.3" fill="#fff" stroke="#000" stroke-width="0.9"/>
<circle cx="877.5" cy="400" r="3.3" fill="#fff" stroke="#000" stroke-width="0.9"/>
<circle cx="867.8" cy="416.3" r="3.3" fill="#fff" stroke="#000" stroke-width="0.9"/>
<polyline points="876.9,391.9 868.2,412.8" fill="none" stroke="#000" stroke-width="0.9"/>
<polyline points="696.2,411.2 700.6,398.8 703.8,412.5 707.5,398.8 711.2,411.9 714.4,401" fill="none" stroke="#000" stroke-width="0.9"/>
<polyline points="713.8,413 713.8,424" fill="none" stroke="#000" stroke-width="1.2" stroke-dasharray="2 2"/>
<polyline points="832.2,401 832.2,410" fill="none" stroke="#000" stroke-width="1.4"/>
<polyline points="832.5,404 835,412.5 838.7,398 841.9,412.5 845.6,398.8 849.4,412.5" fill="none" stroke="#000" stroke-width="0.9"/>
<polyline points="831.9,412.5 831.9,424.5" fill="none" stroke="#000" stroke-width="1.2" stroke-dasharray="2 2"/>
<polyline points="657.5,404.6 661.5,404.6" fill="none" stroke="#000" stroke-width="1" shape-rendering="crispEdges"/>
<polyline points="884.8,404.6 888,404.6" fill="none" stroke="#000" stroke-width="1" shape-rendering="crispEdges"/>
<text x="604" y="408.89" font-size="9.2" fill="#000" textLength="53.5" lengthAdjust="spacingAndGlyphs" stroke="#000" stroke-width="0.3">Front Pump</text>
<text x="629" y="419.89" font-size="9.2" fill="#000" textLength="28.5" lengthAdjust="spacingAndGlyphs" stroke="#000" stroke-width="0.3">Switch</text>
<text x="887.5" y="409.19" font-size="9.2" fill="#000" textLength="49" lengthAdjust="spacingAndGlyphs" stroke="#000" stroke-width="0.3">Rear Pump</text>
<text x="888" y="419.79" font-size="9.2" fill="#000" textLength="28.3" lengthAdjust="spacingAndGlyphs" stroke="#000" stroke-width="0.3">Switch</text>
<polyline points="681.5,424 681.5,433 679.5,434.5" fill="none" stroke="#000" stroke-width="1"/>
<text x="652.5" y="438.29" font-size="3.6" font-weight="bold" fill="#223" textLength="37.8" lengthAdjust="spacingAndGlyphs">14_Pump Drive Motor</text>
<polyline points="864.4,424.4 864.4,433.5 862.4,435" fill="none" stroke="#000" stroke-width="1"/>
<text x="835.6" y="437.89" font-size="3.6" font-weight="bold" fill="#223" textLength="37.4" lengthAdjust="spacingAndGlyphs">14_Pump Drive Motor</text>
<path d="M616 330.300Q628.500 322 641 330.300Z" fill="#b0b0b0" stroke="#333" stroke-width="0.8"/>
<rect x="602.5" y="330.3" width="51.2" height="39.3" fill="#b0b0b0" stroke="#000" stroke-width="1"/>
<polyline points="619.5,339.6 638,339.6" fill="none" stroke="#000" stroke-width="0.9"/>
<polyline points="628.7,334.5 628.7,344.7" fill="none" stroke="#000" stroke-width="0.9"/>
<text x="606.5" y="373.69" font-size="9.2" fill="#000" textLength="42" lengthAdjust="spacingAndGlyphs" stroke="#000" stroke-width="0.3">BATTERY</text>
<path d="M603.1 327L603.1 318.1L604.9 315.6L607.4 316L605.8 318.6L605.8 327Z" fill="#40e040" stroke="#043" stroke-width="0.7"/>
<path d="M649.3 327L649.3 318.1L651.1 315.6L653.6 316L652 318.6L652 327Z" fill="#10a020" stroke="#043" stroke-width="0.7"/>
<text x="592" y="314.79" font-size="3.6" font-weight="bold" fill="#223" textLength="13" lengthAdjust="spacingAndGlyphs">CH GND</text>
<text x="636" y="314.79" font-size="3.6" font-weight="bold" fill="#223" textLength="18" lengthAdjust="spacingAndGlyphs">BATT_12V</text>
<text x="609" y="432.79" font-size="3.6" font-weight="bold" fill="#223" textLength="15.7" lengthAdjust="spacingAndGlyphs">CH GND</text>
<path d="M618.700 435.300L623.800 435.300L622.300 437.800L622.300 447L620.200 447L620.200 437.800Z" fill="#40e040" stroke="#043" stroke-width="0.7"/>
<polygon points="605,447.2 637,447.2 634,449.9 608,449.9" fill="#000080" stroke="#000080" stroke-width="0.5"/>
<polygon points="608,457.2 634,457.2 631.5,459.9 610.5,459.9" fill="#000080" stroke="#000080" stroke-width="0.5"/>
<polygon points="615.6,467 627,467 625,469.4 617.6,469.4" fill="#000080" stroke="#000080" stroke-width="0.5"/>
<text x="602.3" y="474.89" font-size="9.2" fill="#000" textLength="38.7" lengthAdjust="spacingAndGlyphs" stroke="#000" stroke-width="0.3">CH GND</text>
<rect x="690.5" y="476.3" width="75.1" height="35" fill="#00f8b8" stroke="#000" stroke-width="1"/>
<text x="695.3" y="492.13" font-size="9.3" font-weight="bold" fill="#000" textLength="65.7" lengthAdjust="spacingAndGlyphs">Front Damper</text>
<text x="706.3" y="503.93" font-size="9.3" font-weight="bold" fill="#000" textLength="43.4" lengthAdjust="spacingAndGlyphs">Chamber</text>
<rect x="771.3" y="476.3" width="75.3" height="35" fill="#00f8b8" stroke="#000" stroke-width="1"/>
<text x="777.3" y="492.13" font-size="9.3" font-weight="bold" fill="#000" textLength="63.7" lengthAdjust="spacingAndGlyphs">Rear Damper</text>
<text x="787.3" y="503.93" font-size="9.3" font-weight="bold" fill="#000" textLength="43.7" lengthAdjust="spacingAndGlyphs">Chamber</text>
<text x="726.9" y="531.02" font-size="9" fill="#123" textLength="70.1" lengthAdjust="spacingAndGlyphs">BF Level Sensor</text>
<rect x="745" y="537.3" width="35" height="20.6" fill="#00a4b0" stroke="#00808a" stroke-width="1"/>
<polyline points="747,538.7 778,538.7" fill="none" stroke="#000" stroke-width="0.9"/>
<polyline points="762.5,538.7 762.5,557" fill="none" stroke="#000" stroke-width="0.9"/>
<circle cx="751" cy="545.6" r="3.2" fill="#fff" stroke="#000" stroke-width="0.9"/>
<circle cx="773.8" cy="545.6" r="3.2" fill="#fff" stroke="#000" stroke-width="0.9"/>
<polyline points="763,552.5 771,552.2 763,556.5" fill="none" stroke="#000" stroke-width="0.8"/>
<polyline points="745,545.6 739.4,545.6 739.4,561.3 1050.6,561.3 1050.6,533.2" fill="none" stroke="#000" stroke-width="1" shape-rendering="crispEdges"/>
<polyline points="743.8,543 743.8,548" fill="none" stroke="#000" stroke-width="1" shape-rendering="crispEdges"/>
<polyline points="777,546 783,546" fill="none" stroke="#000" stroke-width="1" shape-rendering="crispEdges"/>
<polyline points="787,546.5 1040.5,546.5 1040.5,533.2" fill="none" stroke="#000" stroke-width="1" shape-rendering="crispEdges"/>
<polygon points="914.5,546.5 910.9,544.2 910.9,548.8" fill="#000"/>
<polygon points="1040.5,535.8 1038.2,539.4 1042.8,539.4" fill="#000"/>
<polygon points="1050.6,552.3 1048.3,548.7 1052.9,548.7" fill="#000"/>
<polygon points="693,563.5 720,563.5 734.7,570.3 720,577.5 693,577.5" fill="#b4e0ff" stroke="#000" stroke-width="1"/>
<text x="698" y="573.61" font-size="8.4" font-weight="bold" fill="#123" textLength="34.5" lengthAdjust="spacingAndGlyphs">Fluid Fill</text>
<polyline points="734.7,570.3 740,570.3 740,579.4" fill="none" stroke="#000" stroke-width="1" shape-rendering="crispEdges"/>
<polygon points="742.5,570.3 739.5,568.3 739.5,572.3" fill="#000"/>
<polygon points="740,579.4 737.8,576.2 742.2,576.2" fill="#000"/>
<circle cx="762.5" cy="560" r="1.3" fill="#000" stroke="#000" stroke-width="0.5"/>
<polyline points="762.5,560 762.5,564 766.3,566 766.3,579.4" fill="none" stroke="#000" stroke-width="1"/>
<polygon points="766.3,567.5 764.1,570.7 768.5,570.7" fill="#000"/>
<rect x="726.3" y="579.4" width="53.4" height="12.1" fill="#7a5a3a" stroke="#000" stroke-width="1"/>
<text x="735" y="588.42" font-size="7.6" fill="#efe0c8" textLength="36.9" lengthAdjust="spacingAndGlyphs">Brake Fluid</text>
<polyline points="739.4,591.5 739.4,596.3" fill="none" stroke="#000" stroke-width="1.6"/>
<polyline points="766.3,591.5 766.3,596.3" fill="none" stroke="#000" stroke-width="1.6"/>
<rect x="726.3" y="596.3" width="53.4" height="19.3" fill="#00f8b8" stroke="#000" stroke-width="1"/>
<text x="735.4" y="609.16" font-size="8" font-weight="bold" fill="#000" textLength="35.6" lengthAdjust="spacingAndGlyphs">Reservior</text>
<rect x="738" y="621.3" width="33.9" height="10" fill="#5454fa" stroke="#000" stroke-width="0.9"/>
<rect x="726.3" y="631.3" width="51.2" height="16.2" fill="#5454fa" stroke="#000" stroke-width="0.9"/>
<polygon points="777.5,623.5 782.5,614 782.5,666 777.5,654" fill="#5454fa" stroke="#000" stroke-width="0.9"/>
<rect x="782.5" y="610.4" width="10" height="58.3" fill="#5454fa" stroke="#000" stroke-width="0.9"/>
<polygon points="792.5,613 795.6,613 798.8,633 798.8,648 795.6,666.3 792.5,666.3" fill="#5454fa" stroke="#000" stroke-width="0.9"/>
<rect x="798" y="628" width="4" height="22.6" fill="#5454fa" stroke="#000" stroke-width="0.9"/>
<rect x="802" y="631.3" width="20.9" height="16.2" fill="#5454fa" stroke="#000" stroke-width="0.9"/>
<rect x="822.9" y="636.6" width="15.8" height="4.7" fill="#5454fa" stroke="#000" stroke-width="0.9"/>
<rect x="838.5" y="631" width="4" height="15.5" fill="#5454fa" stroke="#000" stroke-width="0.9"/>
<rect x="842.5" y="635" width="9.5" height="4.4" fill="#90b4e4" stroke="#3a5a9a" stroke-width="0.7"/>
<text x="731.5" y="655.08" font-size="8.6" fill="#000" textLength="33.5" lengthAdjust="spacingAndGlyphs" stroke="#000" stroke-width="0.3">Master</text>
<text x="725" y="666.78" font-size="8.6" fill="#000" textLength="40" lengthAdjust="spacingAndGlyphs" stroke="#000" stroke-width="0.3">Cylinder</text>
<polyline points="705,636.5 706.5,638.9 705,641.3" fill="none" stroke="#000" stroke-width="0.8"/>
<polyline points="709,636.5 707.5,638.9 709,641.3" fill="none" stroke="#000" stroke-width="0.8"/>
<polygon points="845.62,623.75 848.75,621.25 852.5,622.5 862.5,631.25 863.12,638.75 865,650 866.88,667.5 868.12,677.5 872.5,683.75 876.25,687.5 873.75,688.25 867.5,686.25 862.5,682.5 860,677.5 858.12,660 855,645 852.5,636.25 847.5,628.75" fill="#90b4e4" stroke="#223a6a" stroke-width="0.9"/>
<polygon points="871.3,678.7 877.5,676.2 886.3,690.6 880,693" fill="#505050" stroke="#333" stroke-width="0.6"/>
<text x="869.7" y="653.84" font-size="12.4" fill="#000" textLength="35.3" lengthAdjust="spacingAndGlyphs" stroke="#000" stroke-width="0.3">Brake</text>
<text x="869.7" y="670.04" font-size="12.4" fill="#000" textLength="35.9" lengthAdjust="spacingAndGlyphs" stroke="#000" stroke-width="0.3">Pedal</text>
<polyline points="884,684 893.7,684" fill="none" stroke="#000" stroke-width="1" shape-rendering="crispEdges"/>
<polygon points="883.5,684 887.5,681.4 887.5,686.6" fill="#000"/>
<polygon points="893.5,684 889.5,681.4 889.5,686.6" fill="#000"/>
<polygon points="893.7,684.5 904,677 991,677 991,692 904,692" fill="#ffe0b8" stroke="#000" stroke-width="1"/>
<text x="911" y="688.04" font-size="9.6" font-weight="bold" fill="#000" textLength="68" lengthAdjust="spacingAndGlyphs">Foot Pressure</text>
<text x="823.7" y="575.13" font-size="7.9" fill="#123" textLength="52.8" lengthAdjust="spacingAndGlyphs">Brake Light SW</text>
<polyline points="837.3,555 837.3,582.5 842.5,582.5" fill="none" stroke="#000" stroke-width="1" shape-rendering="crispEdges"/>
<polygon points="844,582.5 841,580.5 841,584.5" fill="#000"/>
<circle cx="845.9" cy="581.9" r="2.7" fill="#b4ecff" stroke="#000" stroke-width="0.8"/>
<circle cx="866.9" cy="581.9" r="2.7" fill="#b4ecff" stroke="#000" stroke-width="0.8"/>
<polyline points="843,588.4 870,588.4" fill="none" stroke="#000" stroke-width="1" shape-rendering="crispEdges"/>
<polyline points="858,588.4 858,620.6" fill="none" stroke="#000" stroke-width="1" shape-rendering="crispEdges"/>
<polygon points="858,609 855.8,612.2 860.2,612.2" fill="#000"/>
<polyline points="869.6,581.2 1082.5,581.2 1082.5,533.2" fill="none" stroke="#000" stroke-width="1" shape-rendering="crispEdges"/>
<polygon points="980,581.2 976.4,578.9 976.4,583.5" fill="#000"/>
<polyline points="837.3,555 1092.5,555 1092.5,533.2" fill="none" stroke="#000" stroke-width="1" shape-rendering="crispEdges"/>
<polygon points="1092.5,551 1090.2,547.4 1094.8,547.4" fill="#000"/>
<polygon points="1082.5,554.5 1080.2,558.1 1084.8,558.1" fill="#000"/>
<rect x="1035.6" y="266.3" width="61.9" height="266.9" fill="#ff80c0" stroke="#000" stroke-width="1.2"/>
<text x="1047.7" y="406.59" font-size="17" font-weight="bold" fill="#000" textLength="36.3" lengthAdjust="spacingAndGlyphs">ECU</text>
<rect x="938.5" y="274.7" width="80.3" height="43.7" fill="#c8ffb0" stroke="#000" stroke-width="1.2"/>
<text x="941.3" y="300.04" font-size="9.6" font-weight="bold" fill="#000" textLength="74.3" lengthAdjust="spacingAndGlyphs">SENS CONN 2A</text>
<rect x="941.5" y="488.5" width="79.1" height="44" fill="#c8ffb0" stroke="#000" stroke-width="1.2"/>
<text x="944.4" y="514.04" font-size="9.6" font-weight="bold" fill="#000" textLength="74.1" lengthAdjust="spacingAndGlyphs">SENS CONN 1A</text>
<polyline points="1018.8,280.3 1035.6,280.3" fill="none" stroke="#000" stroke-width="1" shape-rendering="crispEdges"/>
<polygon points="1032,280.3 1028.4,278 1028.4,282.6" fill="#000"/>
<polyline points="1018.8,291.3 1035.6,291.3" fill="none" stroke="#000" stroke-width="1" shape-rendering="crispEdges"/>
<polygon points="1022.5,291.3 1026.1,289 1026.1,293.6" fill="#000"/>
<polyline points="1018.8,302.5 1035.6,302.5" fill="none" stroke="#000" stroke-width="1" shape-rendering="crispEdges"/>
<polygon points="1032,302.5 1028.4,300.2 1028.4,304.8" fill="#000"/>
<polyline points="1018.8,313.7 1035.6,313.7" fill="none" stroke="#000" stroke-width="1" shape-rendering="crispEdges"/>
<polygon points="1022.5,313.7 1026.1,311.4 1026.1,316" fill="#000"/>
<polyline points="1022,493.5 1035.6,493.5" fill="none" stroke="#000" stroke-width="1" shape-rendering="crispEdges"/>
<polygon points="1032.5,493.5 1028.9,491.2 1028.9,495.8" fill="#000"/>
<polyline points="1022,505.4 1035.6,505.4" fill="none" stroke="#000" stroke-width="1" shape-rendering="crispEdges"/>
<polygon points="1023,505.4 1026.6,503.1 1026.6,507.7" fill="#000"/>
<polyline points="1022,516.5 1035.6,516.5" fill="none" stroke="#000" stroke-width="1" shape-rendering="crispEdges"/>
<polygon points="1032.5,516.5 1028.9,514.2 1028.9,518.8" fill="#000"/>
<polyline points="1022,527.3 1035.6,527.3" fill="none" stroke="#000" stroke-width="1" shape-rendering="crispEdges"/>
<polygon points="1023,527.3 1026.6,525 1026.6,529.6" fill="#000"/>
<polyline points="938.5,279.4 929.5,279.4" fill="none" stroke="#000" stroke-width="1" shape-rendering="crispEdges"/>
<polyline points="929.5,278.4 928.5,281.6" fill="none" stroke="#000" stroke-width="1"/>
<text x="914.5" y="281.19" font-size="3.6" font-weight="bold" fill="#223" textLength="13.5" lengthAdjust="spacingAndGlyphs">RF SS+</text>
<polyline points="938.5,290.4 929.5,290.4" fill="none" stroke="#000" stroke-width="1" shape-rendering="crispEdges"/>
<polyline points="929.5,289.4 928.5,292.6" fill="none" stroke="#000" stroke-width="1"/>
<text x="914.5" y="292.19" font-size="3.6" font-weight="bold" fill="#223" textLength="13.5" lengthAdjust="spacingAndGlyphs">RF SS-</text>
<polyline points="938.5,301.9 929.5,301.9" fill="none" stroke="#000" stroke-width="1" shape-rendering="crispEdges"/>
<polyline points="929.5,300.9 928.5,304.1" fill="none" stroke="#000" stroke-width="1"/>
<text x="914.5" y="303.69" font-size="3.6" font-weight="bold" fill="#223" textLength="13.5" lengthAdjust="spacingAndGlyphs">RR SS+</text>
<polyline points="938.5,313.1 929.5,313.1" fill="none" stroke="#000" stroke-width="1" shape-rendering="crispEdges"/>
<polyline points="929.5,312.1 928.5,315.3" fill="none" stroke="#000" stroke-width="1"/>
<text x="914.5" y="314.89" font-size="3.6" font-weight="bold" fill="#223" textLength="13.5" lengthAdjust="spacingAndGlyphs">RR SS-</text>
<polyline points="941.5,493.5 932.5,493.5" fill="none" stroke="#000" stroke-width="1" shape-rendering="crispEdges"/>
<polyline points="932.5,492.5 931.5,495.7" fill="none" stroke="#000" stroke-width="1"/>
<text x="917.5" y="495.29" font-size="3.6" font-weight="bold" fill="#223" textLength="13.5" lengthAdjust="spacingAndGlyphs">LF SS+</text>
<polyline points="941.5,504.6 932.5,504.6" fill="none" stroke="#000" stroke-width="1" shape-rendering="crispEdges"/>
<polyline points="932.5,503.6 931.5,506.8" fill="none" stroke="#000" stroke-width="1"/>
<text x="917.5" y="506.39" font-size="3.6" font-weight="bold" fill="#223" textLength="13.5" lengthAdjust="spacingAndGlyphs">LF SS-</text>
<polyline points="941.5,516.3 932.5,516.3" fill="none" stroke="#000" stroke-width="1" shape-rendering="crispEdges"/>
<polyline points="932.5,515.3 931.5,518.5" fill="none" stroke="#000" stroke-width="1"/>
<text x="917.5" y="518.09" font-size="3.6" font-weight="bold" fill="#223" textLength="13.5" lengthAdjust="spacingAndGlyphs">LR SS+</text>
<polyline points="941.5,527.3 932.5,527.3" fill="none" stroke="#000" stroke-width="1" shape-rendering="crispEdges"/>
<polyline points="932.5,526.3 931.5,529.5" fill="none" stroke="#000" stroke-width="1"/>
<text x="917.5" y="529.09" font-size="3.6" font-weight="bold" fill="#223" textLength="13.5" lengthAdjust="spacingAndGlyphs">LR SS-</text>
<polyline points="1035.6,334 1026.6,334" fill="none" stroke="#000" stroke-width="1" shape-rendering="crispEdges"/>
<polyline points="1026.6,333 1025.6,336.2" fill="none" stroke="#000" stroke-width="1"/>
<text x="998.1" y="335.79" font-size="3.6" font-weight="bold" fill="#223" textLength="27" lengthAdjust="spacingAndGlyphs">LF INLET SOL</text>
<polyline points="1035.6,342.9 1026.6,342.9" fill="none" stroke="#000" stroke-width="1" shape-rendering="crispEdges"/>
<polyline points="1026.6,341.9 1025.6,345.1" fill="none" stroke="#000" stroke-width="1"/>
<text x="995.85" y="344.69" font-size="3.6" font-weight="bold" fill="#223" textLength="29.25" lengthAdjust="spacingAndGlyphs">LF OUTLET SOL</text>
<polyline points="1035.6,355 1026.6,355" fill="none" stroke="#000" stroke-width="1" shape-rendering="crispEdges"/>
<polyline points="1026.6,354 1025.6,357.2" fill="none" stroke="#000" stroke-width="1"/>
<text x="998.1" y="356.79" font-size="3.6" font-weight="bold" fill="#223" textLength="27" lengthAdjust="spacingAndGlyphs">LR INLET SOL</text>
<polyline points="1035.6,364.1 1026.6,364.1" fill="none" stroke="#000" stroke-width="1" shape-rendering="crispEdges"/>
<polyline points="1026.6,363.1 1025.6,366.3" fill="none" stroke="#000" stroke-width="1"/>
<text x="995.85" y="365.89" font-size="3.6" font-weight="bold" fill="#223" textLength="29.25" lengthAdjust="spacingAndGlyphs">LR OUTLET SOL</text>
<polyline points="1035.6,440.4 1026.6,440.4" fill="none" stroke="#000" stroke-width="1" shape-rendering="crispEdges"/>
<polyline points="1026.6,439.4 1025.6,442.6" fill="none" stroke="#000" stroke-width="1"/>
<text x="998.1" y="442.19" font-size="3.6" font-weight="bold" fill="#223" textLength="27" lengthAdjust="spacingAndGlyphs">RF INLET SOL</text>
<polyline points="1035.6,454.1 1026.6,454.1" fill="none" stroke="#000" stroke-width="1" shape-rendering="crispEdges"/>
<polyline points="1026.6,453.1 1025.6,456.3" fill="none" stroke="#000" stroke-width="1"/>
<text x="995.85" y="455.89" font-size="3.6" font-weight="bold" fill="#223" textLength="29.25" lengthAdjust="spacingAndGlyphs">RF OUTLET SOL</text>
<polyline points="1035.6,466.6 1026.6,466.6" fill="none" stroke="#000" stroke-width="1" shape-rendering="crispEdges"/>
<polyline points="1026.6,465.6 1025.6,468.8" fill="none" stroke="#000" stroke-width="1"/>
<text x="998.1" y="468.39" font-size="3.6" font-weight="bold" fill="#223" textLength="27" lengthAdjust="spacingAndGlyphs">RR INLET SOL</text>
<polyline points="1035.6,476.9 1026.6,476.9" fill="none" stroke="#000" stroke-width="1" shape-rendering="crispEdges"/>
<polyline points="1026.6,475.9 1025.6,479.1" fill="none" stroke="#000" stroke-width="1"/>
<text x="995.85" y="478.69" font-size="3.6" font-weight="bold" fill="#223" textLength="29.25" lengthAdjust="spacingAndGlyphs">RR OUTLET SOL</text>
<polygon points="954.1,407.3 1010.6,407.3 1021.3,412.5 1010.6,417.5 954.1,417.5" fill="#ffb0b0" stroke="#000" stroke-width="1"/>
<polyline points="1021.3,412.5 1035.6,412.5" fill="none" stroke="#000" stroke-width="1" shape-rendering="crispEdges"/>
<polygon points="1022.5,412.5 1026.1,410.2 1026.1,414.8" fill="#000"/>
<polygon points="1100.5,203.7 1110,196.3 1189.5,196.3 1189.5,211.3 1110,211.3" fill="#ffe0b8" stroke="#000" stroke-width="1"/>
<text x="1123" y="207.04" font-size="9.6" font-weight="bold" fill="#000" textLength="42.5" lengthAdjust="spacingAndGlyphs">Software</text>
<polygon points="1099.5,223.8 1107,216.3 1182,216.3 1189.5,223.8 1182,231.3 1107,231.3" fill="#ffe0b8" stroke="#000" stroke-width="1"/>
<text x="1115" y="226.74" font-size="9.6" font-weight="bold" fill="#000" textLength="58" lengthAdjust="spacingAndGlyphs">PCM COMM</text>
<polyline points="1100.5,203.3 1060.6,203.3 1060.6,266.3" fill="none" stroke="#000" stroke-width="1" shape-rendering="crispEdges"/>
<polygon points="1074.5,203.3 1078.5,200.7 1078.5,205.9" fill="#000"/>
<polygon points="1084.5,203.3 1080.5,200.7 1080.5,205.9" fill="#000"/>
<polygon points="1060.6,231 1058,235 1063.2,235" fill="#000"/>
<polygon points="1060.6,241 1058,237 1063.2,237" fill="#000"/>
<polyline points="1099.5,223.6 1077.5,223.6 1077.5,266.3" fill="none" stroke="#000" stroke-width="1" shape-rendering="crispEdges"/>
<polygon points="1084,223.6 1088,221 1088,226.2" fill="#000"/>
<polygon points="1094,223.6 1090,221 1090,226.2" fill="#000"/>
<polygon points="1077.5,240 1075.2,243.6 1079.8,243.6" fill="#000"/>
<rect x="1124.3" y="268.7" width="84.2" height="33.3" fill="#c8ffb0" stroke="#000" stroke-width="1.2"/>
<text x="1140" y="282.94" font-size="9.6" font-weight="bold" fill="#000" textLength="51.6" lengthAdjust="spacingAndGlyphs">Diagnostic</text>
<text x="1141" y="295.14" font-size="9.6" font-weight="bold" fill="#000" textLength="49.8" lengthAdjust="spacingAndGlyphs">Connector</text>
<polyline points="1097.5,276.4 1124.3,276.4" fill="none" stroke="#000" stroke-width="1" shape-rendering="crispEdges"/>
<polygon points="1106,276.4 1109.6,274.1 1109.6,278.7" fill="#000"/>
<polyline points="1097.5,295.3 1124.3,295.3" fill="none" stroke="#000" stroke-width="1" shape-rendering="crispEdges"/>
<polygon points="1116.5,295.3 1112.9,293 1112.9,297.6" fill="#000"/>
<polyline points="1210,277.5 1235,277.5" fill="none" stroke="#000" stroke-width="1" shape-rendering="crispEdges"/>
<polygon points="1218,277.5 1221.6,275.2 1221.6,279.8" fill="#000"/>
<polyline points="1210,294.3 1234.5,294.3" fill="none" stroke="#000" stroke-width="1" shape-rendering="crispEdges"/>
<polygon points="1227,294.3 1223.4,292 1223.4,296.6" fill="#000"/>
<polygon points="1235,277.5 1246,270.7 1379.5,270.7 1379.5,284.3 1246,284.3" fill="#c8ffb0" stroke="#000" stroke-width="1"/>
<text x="1241" y="280.99" font-size="9.2" fill="#000" textLength="107.7" lengthAdjust="spacingAndGlyphs" stroke="#000" stroke-width="0.3">Diagnostic Conn Check</text>
<polygon points="1234.5,287.5 1366,287.5 1378.7,294.5 1366,301.3 1234.5,301.3" fill="#ffb0b0" stroke="#000" stroke-width="1"/>
<text x="1241" y="297.89" font-size="9.2" fill="#000" textLength="129" lengthAdjust="spacingAndGlyphs" stroke="#000" stroke-width="0.3">Diagnostic Conn Check RTN</text>
<polyline points="1097.5,308 1106,308 1107,310" fill="none" stroke="#000" stroke-width="1"/>
<text x="1108" y="308.79" font-size="3.6" font-weight="bold" fill="#223" textLength="38" lengthAdjust="spacingAndGlyphs">14_Pump Drive Motor</text>
<polyline points="1097.5,317.5 1242.5,317.5 1242.5,355" fill="none" stroke="#000" stroke-width="1" shape-rendering="crispEdges"/>
<polygon points="1165.6,317.5 1169.6,314.9 1169.6,320.1" fill="#000"/>
<polygon points="1175.6,317.5 1171.6,314.9 1171.6,320.1" fill="#000"/>
<polygon points="1242.5,331.5 1240.2,335.1 1244.8,335.1" fill="#000"/>
<polyline points="1097.5,338.5 1358.7,338.5" fill="none" stroke="#000" stroke-width="1" shape-rendering="crispEdges"/>
<polygon points="1114,338.5 1110.4,336.2 1110.4,340.8" fill="#000"/>
<polygon points="1352,338.5 1348.4,336.2 1348.4,340.8" fill="#000"/>
<circle cx="1242.5" cy="338.5" r="1.2" fill="#000" stroke="#000" stroke-width="0.3"/>
<polyline points="1097.5,408.3 1357,408.3" fill="none" stroke="#000" stroke-width="1" shape-rendering="crispEdges"/>
<polygon points="1114,408.3 1110.4,406 1110.4,410.6" fill="#000"/>
<polygon points="1350,408.3 1346.4,406 1346.4,410.6" fill="#000"/>
<circle cx="1242.5" cy="408.3" r="1.2" fill="#000" stroke="#000" stroke-width="0.3"/>
<polyline points="1242.5,398.7 1242.5,453" fill="none" stroke="#000" stroke-width="1" shape-rendering="crispEdges"/>
<polygon points="1242.5,442.5 1240.2,438.9 1244.8,438.9" fill="#000"/>
<polyline points="1097.5,423.3 1242.5,423.3" fill="none" stroke="#000" stroke-width="1" shape-rendering="crispEdges"/>
<polygon points="1175,423.3 1171.4,421 1171.4,425.6" fill="#000"/>
<polyline points="1097.5,435.3 1107.5,435.3 1107.5,437.5" fill="none" stroke="#000" stroke-width="1" shape-rendering="crispEdges"/>
<polyline points="1097.5,503.1 1242.5,503.1 1242.5,496.3" fill="none" stroke="#000" stroke-width="1" shape-rendering="crispEdges"/>
<polygon points="1118.7,503.1 1122.7,500.5 1122.7,505.7" fill="#000"/>
<polygon points="1128.7,503.1 1124.7,500.5 1124.7,505.7" fill="#000"/>
<polygon points="1242.5,501.5 1240.3,498.5 1244.7,498.5" fill="#000"/>
<polygon points="1242.5,497 1240.5,499.5 1244.5,499.5" fill="#000"/>
<polyline points="1097.5,524.4 1368.5,524.4 1368.5,487.5" fill="none" stroke="#000" stroke-width="1" shape-rendering="crispEdges"/>
<polygon points="1190.5,524.4 1186.9,522.1 1186.9,526.7" fill="#000"/>
<polygon points="1368.5,505 1366.2,508.6 1370.8,508.6" fill="#000"/>
<polyline points="1275.5,524.4 1275.5,585.3" fill="none" stroke="#000" stroke-width="1" shape-rendering="crispEdges"/>
<polyline points="1235.4,585.3 1368.5,585.3 1368.5,556.6" fill="none" stroke="#000" stroke-width="1" shape-rendering="crispEdges"/>
<polygon points="1368.5,570 1366.2,573.6 1370.8,573.6" fill="#000"/>
<polyline points="1235.4,585.3 1235.4,635.3 1366.3,635.3 1366.3,629 1368.5,623.7" fill="none" stroke="#000" stroke-width="1"/>
<polygon points="1366.5,627.5 1364.5,630.5 1368.5,630.5" fill="#000"/>
<path d="M1242.5 355C1232 355 1232 362.9 1239.5 362.9" fill="none" stroke="#000" stroke-width="0.9"/>
<path d="M1242.5 364.4C1232 364.4 1232 371 1239.5 371" fill="none" stroke="#000" stroke-width="0.9"/>
<path d="M1242.5 372.5C1232 372.5 1232 380 1239.5 380" fill="none" stroke="#000" stroke-width="0.9"/>
<path d="M1242.5 381.5C1232 381.5 1232 387.9 1239.5 387.9" fill="none" stroke="#000" stroke-width="0.9"/>
<path d="M1242.5 389.4C1232 389.4 1232 397.2 1239.5 397.2" fill="none" stroke="#000" stroke-width="0.9"/>
<polyline points="1241,355 1245,355" fill="none" stroke="#000" stroke-width="0.9"/>
<polyline points="1239.5,364.4 1245,364.4" fill="none" stroke="#000" stroke-width="0.9"/>
<polyline points="1239.5,372.5 1245,372.5" fill="none" stroke="#000" stroke-width="0.9"/>
<polyline points="1239.5,381.5 1245,381.5" fill="none" stroke="#000" stroke-width="0.9"/>
<polyline points="1239.5,389.4 1245,389.4" fill="none" stroke="#000" stroke-width="0.9"/>
<polyline points="1241,398.7 1245,398.7" fill="none" stroke="#000" stroke-width="0.9"/>
<text x="1245.6" y="374.59" font-size="9.2" fill="#000" textLength="25" lengthAdjust="spacingAndGlyphs" stroke="#000" stroke-width="0.3">Pump</text>
<text x="1245.6" y="385.19" font-size="9.2" fill="#000" textLength="23.8" lengthAdjust="spacingAndGlyphs" stroke="#000" stroke-width="0.3">Relay</text>
<path d="M1242.5 453C1232 453 1232 461 1239.5 461" fill="none" stroke="#000" stroke-width="0.9"/>
<path d="M1242.5 462.5C1232 462.5 1232 469.1 1239.5 469.1" fill="none" stroke="#000" stroke-width="0.9"/>
<path d="M1242.5 470.6C1232 470.6 1232 477.9 1239.5 477.9" fill="none" stroke="#000" stroke-width="0.9"/>
<path d="M1242.5 479.4C1232 479.4 1232 486 1239.5 486" fill="none" stroke="#000" stroke-width="0.9"/>
<path d="M1242.5 487.5C1232 487.5 1232 494.8 1239.5 494.8" fill="none" stroke="#000" stroke-width="0.9"/>
<polyline points="1241,453 1245,453" fill="none" stroke="#000" stroke-width="0.9"/>
<polyline points="1239.5,462.5 1245,462.5" fill="none" stroke="#000" stroke-width="0.9"/>
<polyline points="1239.5,470.6 1245,470.6" fill="none" stroke="#000" stroke-width="0.9"/>
<polyline points="1239.5,479.4 1245,479.4" fill="none" stroke="#000" stroke-width="0.9"/>
<polyline points="1239.5,487.5 1245,487.5" fill="none" stroke="#000" stroke-width="0.9"/>
<polyline points="1241,496.3 1245,496.3" fill="none" stroke="#000" stroke-width="0.9"/>
<text x="1246" y="472.09" font-size="9.2" fill="#000" textLength="39.6" lengthAdjust="spacingAndGlyphs" stroke="#000" stroke-width="0.3">Solenoid</text>
<text x="1246" y="483.09" font-size="9.2" fill="#000" textLength="45.3" lengthAdjust="spacingAndGlyphs" stroke="#000" stroke-width="0.3">Relay Coil</text>
<polyline points="1234.4,379.4 1226.3,379.4 1225,377.5 1219,377.5" fill="none" stroke="#000" stroke-width="1"/>
<polygon points="1225.5,379.4 1228.5,377.4 1228.5,381.4" fill="#000"/>
<polygon points="1218.5,377.5 1221.5,375.5 1221.5,379.5" fill="#000"/>
<polyline points="1234.4,471.3 1216.3,471.3" fill="none" stroke="#000" stroke-width="1" shape-rendering="crispEdges"/>
<polygon points="1221.5,471.3 1225.1,469 1225.1,473.6" fill="#000"/>
<text x="1135" y="375.19" font-size="9.2" fill="#000" textLength="53.7" lengthAdjust="spacingAndGlyphs" stroke="#000" stroke-width="0.3">Pump Relay</text>
<text x="1154" y="385.99" font-size="9.2" fill="#000" textLength="35" lengthAdjust="spacingAndGlyphs" stroke="#000" stroke-width="0.3">Contact</text>
<polyline points="1200.3,350.6 1200.3,363.3" fill="none" stroke="#000" stroke-width="1" shape-rendering="crispEdges"/>
<polyline points="1199,351 1201.8,350.3" fill="none" stroke="#000" stroke-width="1"/>
<polyline points="1200.3,390.3 1200.3,404.4" fill="none" stroke="#000" stroke-width="1" shape-rendering="crispEdges"/>
<polyline points="1198.8,405.3 1201.6,403.5" fill="none" stroke="#000" stroke-width="1"/>
<polyline points="1200.6,369.4 1191.9,387.5" fill="none" stroke="#000" stroke-width="0.9"/>
<ellipse cx="1200" cy="366.3" rx="3.7" ry="2.8" fill="#b4ecff" stroke="#000" stroke-width="0.8"/>
<ellipse cx="1200" cy="387.3" rx="3.7" ry="2.8" fill="#b4ecff" stroke="#000" stroke-width="0.8"/>
<text x="1171" y="347.89" font-size="3.6" font-weight="bold" fill="#223" textLength="38" lengthAdjust="spacingAndGlyphs">14_Pump Drive Motor</text>
<text x="1189" y="408.29" font-size="3.6" font-weight="bold" fill="#634" textLength="15" lengthAdjust="spacingAndGlyphs">IGN 12V</text>
<text x="1121.9" y="463.89" font-size="9.2" fill="#000" textLength="67.8" lengthAdjust="spacingAndGlyphs" stroke="#000" stroke-width="0.3">Solenoid Relay</text>
<text x="1150" y="474.89" font-size="9.2" fill="#000" textLength="39.7" lengthAdjust="spacingAndGlyphs" stroke="#000" stroke-width="0.3">Contacts</text>
<polyline points="1199.4,447.3 1199.4,458" fill="none" stroke="#000" stroke-width="1" shape-rendering="crispEdges"/>
<polyline points="1198,448 1200.8,446.4" fill="none" stroke="#000" stroke-width="1"/>
<polyline points="1198.7,463.7 1187.5,483.7" fill="none" stroke="#000" stroke-width="0.9"/>
<circle cx="1198.1" cy="461.3" r="3.1" fill="#b4ecff" stroke="#000" stroke-width="0.8"/>
<circle cx="1185.4" cy="484.4" r="3.1" fill="#b4ecff" stroke="#000" stroke-width="0.8"/>
<circle cx="1210.4" cy="484.4" r="3.1" fill="#b4ecff" stroke="#000" stroke-width="0.8"/>
<polyline points="1181,484.4 1182.3,484.4" fill="none" stroke="#000" stroke-width="1" shape-rendering="crispEdges"/>
<polyline points="1213.5,484.4 1216.5,484.4" fill="none" stroke="#000" stroke-width="1" shape-rendering="crispEdges"/>
<path d="M1184.300 490.600L1186.700 490.600L1186.700 498.300L1189 498.300L1189 502.200L1183 502.200L1184.300 500Z" fill="#40e040" stroke="#043" stroke-width="0.7"/>
<polyline points="1211.3,490.6 1211.3,499 1209.3,500.8" fill="none" stroke="#000" stroke-width="1"/>
<text x="1173" y="504.89" font-size="3.6" font-weight="bold" fill="#634" textLength="15.7" lengthAdjust="spacingAndGlyphs">CH GND</text>
<text x="1199.4" y="504.89" font-size="3.6" font-weight="bold" fill="#634" textLength="13.6" lengthAdjust="spacingAndGlyphs">IGN 12V</text>
<polyline points="1111,480.5 1112,478.5 1121,478.5" fill="none" stroke="#000" stroke-width="1"/>
<circle cx="1130.4" cy="477.9" r="9.6" fill="#b4ecff" stroke="#000" stroke-width="0.9"/>
<polyline points="1130.4,471.3 1130.4,484.4" fill="none" stroke="#000" stroke-width="0.9"/>
<polyline points="1138.7,471.3 1130.4,477.9 1138.7,484.4" fill="none" stroke="#000" stroke-width="0.9"/>
<polyline points="1138.7,470.5 1138.7,485" fill="none" stroke="#000" stroke-width="0.9"/>
<polyline points="1140,478.5 1148.7,478.5 1148.7,503.1" fill="none" stroke="#000" stroke-width="1" shape-rendering="crispEdges"/>
<polygon points="1140.5,478.5 1143.9,476.2 1143.9,480.8" fill="#000"/>
<text x="1124.7" y="493.82" font-size="9" fill="#123" textLength="10.9" lengthAdjust="spacingAndGlyphs">D1</text>
<path d="M1059.700 533.700L1062.100 533.700L1062.100 542L1060.300 545L1057.800 545.300L1057.500 543.300L1059.700 542Z" fill="#40e040" stroke="#043" stroke-width="0.7"/>
<polyline points="1071.9,533.2 1071.9,542 1069.8,543.5" fill="none" stroke="#000" stroke-width="1"/>
<text x="1093" y="592.79" font-size="3.6" font-weight="bold" fill="#223" textLength="18" lengthAdjust="spacingAndGlyphs">BATT_12V</text>
<path d="M1111 591L1113.500 589L1115 590.800L1123 590.800L1123 593L1115 593L1113 594.800L1111 593.500Z" fill="#10a020" stroke="#043" stroke-width="0.7"/>
<circle cx="1127.5" cy="591.9" r="4.5" fill="#b4ecff" stroke="#000" stroke-width="0.9"/>
<circle cx="1152.5" cy="591.9" r="4.5" fill="#b4ecff" stroke="#000" stroke-width="0.9"/>
<polyline points="1132,591.9 1137.5,591.9" fill="none" stroke="#000" stroke-width="1" shape-rendering="crispEdges"/>
<polyline points="1142,591.9 1148,591.9" fill="none" stroke="#000" stroke-width="1" shape-rendering="crispEdges"/>
<polyline points="1137,595 1142.5,589" fill="none" stroke="#000" stroke-width="0.8"/>
<polyline points="1157,591.9 1179.5,591.9" fill="none" stroke="#000" stroke-width="1" shape-rendering="crispEdges"/>
<polygon points="1171.5,591.9 1167.9,589.6 1167.9,594.2" fill="#000"/>
<circle cx="1182.5" cy="591.9" r="2.7" fill="#b4ecff" stroke="#000" stroke-width="0.8"/>
<circle cx="1203.2" cy="591.9" r="2.7" fill="#b4ecff" stroke="#000" stroke-width="0.8"/>
<polyline points="1185.6,592.5 1203.7,583.5" fill="none" stroke="#000" stroke-width="0.9"/>
<polyline points="1206,591.9 1220,591.9" fill="none" stroke="#000" stroke-width="1" shape-rendering="crispEdges"/>
<polyline points="1219.5,594 1220.5,590" fill="none" stroke="#000" stroke-width="1"/>
<text x="1220.6" y="592.79" font-size="3.6" font-weight="bold" fill="#223" textLength="14.4" lengthAdjust="spacingAndGlyphs">IGN 12V</text>
<text x="1131.9" y="603.13" font-size="7.9" fill="#1c2c4c" textLength="17.5" lengthAdjust="spacingAndGlyphs">Fuse</text>
<text x="1181" y="603.43" font-size="7.9" fill="#1c2c4c" textLength="24" lengthAdjust="spacingAndGlyphs">Ignition</text>
<text x="1181" y="612.89" font-size="9.2" fill="#1c2c4c" textLength="23.4" lengthAdjust="spacingAndGlyphs">Switch</text>
<path d="M1213 556C1215 553 1219 555 1221 557C1223 554 1227 555 1229 558C1234 558 1238 562 1241 567C1244 571 1243 577 1240 579C1236 581 1231 579 1227 576C1223 575 1218 573 1215 570C1213 569 1214 567 1216 567C1213 565 1212 563 1214 562C1211 560 1211 557 1213 556Z" fill="#c89878" stroke="#b48868" stroke-width="0.6"/>
<polyline points="1215,558.5 1222,564" fill="none" stroke="#f4e4d8" stroke-width="0.7"/>
<polyline points="1218.5,556.5 1226,562.5" fill="none" stroke="#f4e4d8" stroke-width="0.7"/>
<polyline points="1223,556.5 1230,562" fill="none" stroke="#f4e4d8" stroke-width="0.7"/>
<polyline points="1215,568.5 1221,570.5" fill="none" stroke="#f4e4d8" stroke-width="0.7"/>
<polyline points="1210.6,567.3 1193,567.3 1193,575.6" fill="none" stroke="#000" stroke-width="1" shape-rendering="crispEdges"/>
<polygon points="1199,567.3 1202.6,565 1202.6,569.6" fill="#000"/>
<polygon points="1193,576.5 1190.7,572.9 1195.3,572.9" fill="#000"/>
<text x="1243.5" y="571.12" font-size="9" fill="#123" textLength="65" lengthAdjust="spacingAndGlyphs">Driver Ignition</text>
<path d="M1363.1 352.7L1363.1 340.7A14.4 13.4 0 0 1 1391.9 340.7L1391.9 352.7Z" fill="#a85800" stroke="#000" stroke-width="1"/>
<polyline points="1370.3,358.7 1370.3,342.6 1384.7,342.6 1384.7,358.7" fill="none" stroke="#000" stroke-width="0.9"/>
<polygon points="1373.2,338.9 1373.2,345.9 1380.1,342.5" fill="#fff" stroke="#000" stroke-width="0.7"/>
<polyline points="1381.1,338.3 1381.1,346.6" fill="none" stroke="#000" stroke-width="0.9"/>
<text x="1340.4" y="326.92" font-size="9" fill="#000" textLength="74" lengthAdjust="spacingAndGlyphs" stroke="#000" stroke-width="0.3">Brake Fluid LED</text>
<path d="M1361.3 417.3L1361.3 404.95A14.35 13.35 0 0 1 1390 404.95L1390 417.3Z" fill="#a85800" stroke="#000" stroke-width="1"/>
<polyline points="1368.5,423.3 1368.5,406.9 1382.8,406.9 1382.8,423.3" fill="none" stroke="#000" stroke-width="0.9"/>
<polygon points="1371.35,403.2 1371.35,410.2 1378.25,406.8" fill="#fff" stroke="#000" stroke-width="0.7"/>
<polyline points="1379.25,402.6 1379.25,410.9" fill="none" stroke="#000" stroke-width="0.9"/>
<text x="1354" y="391.72" font-size="9" fill="#000" textLength="39.7" lengthAdjust="spacingAndGlyphs" stroke="#000" stroke-width="0.3">ABS LED</text>
<path d="M1361.3 487.5L1361.3 473.85A14.15 13.15 0 0 1 1389.6 473.85L1389.6 487.5Z" fill="#a85800" stroke="#000" stroke-width="1"/>
<polyline points="1368.5,493.5 1368.5,476 1382.4,476 1382.4,493.5" fill="none" stroke="#000" stroke-width="0.9"/>
<polygon points="1371.15,472.3 1371.15,479.3 1378.05,475.9" fill="#fff" stroke="#000" stroke-width="0.7"/>
<polyline points="1379.05,471.7 1379.05,480" fill="none" stroke="#000" stroke-width="0.9"/>
<text x="1321.5" y="460.92" font-size="9" fill="#000" textLength="105.5" lengthAdjust="spacingAndGlyphs" stroke="#000" stroke-width="0.3">Right Brake Light Bulb</text>
<path d="M1361.3 556.6L1361.3 543.15A14.15 13.15 0 0 1 1389.6 543.15L1389.6 556.6Z" fill="#a85800" stroke="#000" stroke-width="1"/>
<polyline points="1368.5,562.6 1368.5,545.3 1382.4,545.3 1382.4,562.6" fill="none" stroke="#000" stroke-width="0.9"/>
<polygon points="1371.15,541.6 1371.15,548.6 1378.05,545.2" fill="#fff" stroke="#000" stroke-width="0.7"/>
<polyline points="1379.05,541 1379.05,549.3" fill="none" stroke="#000" stroke-width="0.9"/>
<text x="1303" y="529.82" font-size="9" fill="#000" textLength="140.7" lengthAdjust="spacingAndGlyphs" stroke="#000" stroke-width="0.3">Rear Window Brake Light Bulb</text>
<path d="M1361.3 623.7L1361.3 610.45A14.15 13.15 0 0 1 1389.6 610.45L1389.6 623.7Z" fill="#a85800" stroke="#000" stroke-width="1"/>
<polyline points="1368.5,629.7 1368.5,612.6 1382.4,612.6 1382.4,629.7" fill="none" stroke="#000" stroke-width="0.9"/>
<polygon points="1371.15,608.9 1371.15,615.9 1378.05,612.5" fill="#fff" stroke="#000" stroke-width="0.7"/>
<polyline points="1379.05,608.3 1379.05,616.6" fill="none" stroke="#000" stroke-width="0.9"/>
<text x="1325.3" y="596.92" font-size="9" fill="#000" textLength="97.4" lengthAdjust="spacingAndGlyphs" stroke="#000" stroke-width="0.3">Left Brake Light Bulb</text>
<path d="M1380.8 358.7L1383.2 358.7L1383.2 366.4L1385.4 366.4L1385.4 370L1379.4 370Z" fill="#40e040" stroke="#043" stroke-width="0.7"/>
<text x="1370" y="372.89" font-size="3.6" font-weight="bold" fill="#346" textLength="15.6" lengthAdjust="spacingAndGlyphs">CH GND</text>
<polyline points="1382.8,423 1384,425 1384,432.5 1382.3,434" fill="none" stroke="#000" stroke-width="1"/>
<text x="1372" y="437.79" font-size="3.6" font-weight="bold" fill="#346" textLength="15" lengthAdjust="spacingAndGlyphs">IGN 12V</text>
<path d="M1379.2 493.5L1381.6 493.5L1381.6 500.4L1383.8 500.4L1383.8 504L1377.8 504Z" fill="#40e040" stroke="#043" stroke-width="0.7"/>
<text x="1368" y="506.79" font-size="3.6" font-weight="bold" fill="#346" textLength="15" lengthAdjust="spacingAndGlyphs">CH GND</text>
<path d="M1377.5 562.5L1379.9 562.5L1379.9 570.1L1382.1 570.1L1382.1 573.7L1376.1 573.7Z" fill="#40e040" stroke="#043" stroke-width="0.7"/>
<text x="1366" y="576.89" font-size="3.6" font-weight="bold" fill="#346" textLength="15.5" lengthAdjust="spacingAndGlyphs">CH GND</text>
<path d="M1379.8 630L1382.2 630L1382.2 637L1384.4 637L1384.4 640.6L1378.4 640.6Z" fill="#40e040" stroke="#043" stroke-width="0.7"/>
<text x="1368.5" y="643.79" font-size="3.6" font-weight="bold" fill="#346" textLength="15.5" lengthAdjust="spacingAndGlyphs">CH GND</text>
<polyline points="1395,334.4 1455,334.4" fill="none" stroke="#000" stroke-width="1" shape-rendering="crispEdges"/>
<polygon points="1429.5,334.4 1425.9,332.1 1425.9,336.7" fill="#000"/>
<polyline points="1393,402.3 1452.7,402.3" fill="none" stroke="#000" stroke-width="1" shape-rendering="crispEdges"/>
<polygon points="1429.5,402.3 1425.9,400 1425.9,404.6" fill="#000"/>
<polyline points="1393,476.3 1452.7,476.3" fill="none" stroke="#000" stroke-width="1" shape-rendering="crispEdges"/>
<polygon points="1429.5,476.3 1425.9,474 1425.9,478.6" fill="#000"/>
<polyline points="1393,545.4 1452,545.4" fill="none" stroke="#000" stroke-width="1" shape-rendering="crispEdges"/>
<polygon points="1429.5,545.4 1425.9,543.1 1425.9,547.7" fill="#000"/>
<polyline points="1393,613.4 1452.7,613.4" fill="none" stroke="#000" stroke-width="1" shape-rendering="crispEdges"/>
<polygon points="1429.5,613.4 1425.9,611.1 1425.9,615.7" fill="#000"/>
<text x="1447.5" y="311.12" font-size="9" fill="#000" textLength="52.5" lengthAdjust="spacingAndGlyphs" stroke="#000" stroke-width="0.3">Brake Fluid</text>
<text x="1450.3" y="321.92" font-size="9" fill="#000" textLength="46" lengthAdjust="spacingAndGlyphs" stroke="#000" stroke-width="0.3">LED Light</text>
<text x="1438" y="384.72" font-size="9" fill="#000" textLength="67.3" lengthAdjust="spacingAndGlyphs" stroke="#000" stroke-width="0.3">ABS LED Light</text>
<text x="1433" y="459.22" font-size="9" fill="#000" textLength="79" lengthAdjust="spacingAndGlyphs" stroke="#000" stroke-width="0.3">Right Brake Light</text>
<text x="1412.5" y="527.92" font-size="9" fill="#000" textLength="116.5" lengthAdjust="spacingAndGlyphs" stroke="#000" stroke-width="0.3">Rear Window Brake Light</text>
<text x="1436" y="596.92" font-size="9" fill="#000" textLength="72" lengthAdjust="spacingAndGlyphs" stroke="#000" stroke-width="0.3">Left Brake Light</text>
<polyline points="1433.1,235 1433.1,669" fill="none" stroke="#4a2800" stroke-width="3.8" stroke-linejoin="miter"/>
<polyline points="1433.1,235 1433.1,669" fill="none" stroke="#b86000" stroke-width="1.9" stroke-linejoin="miter"/>
<polyline points="1417,235 1417,669" fill="none" stroke="#70003a" stroke-width="3.8" stroke-linejoin="miter"/>
<polyline points="1417,235 1417,669" fill="none" stroke="#ff107c" stroke-width="1.9" stroke-linejoin="miter"/>
<g transform="translate(1472.7 334.5)">
<polygon points="16.42,1.06 4.75,2.29 5.2,-2.29" fill="#ec4a5a" opacity="0.72"/>
<polygon points="11.26,4.66 3.51,3.74 5.5,-0.4" fill="#ec4a5a" opacity="0.72"/>
<polygon points="11.52,10.72 1.84,4.69 5.14,1.47" fill="#ec4a5a" opacity="0.72"/>
<polygon points="5.14,10.33 -0.04,5 4.15,3.11" fill="#ec4a5a" opacity="0.72"/>
<polygon points="1.23,15.13 -1.92,4.66 2.67,4.31" fill="#ec4a5a" opacity="0.72"/>
<polygon points="-3.39,10.93 -3.57,3.69 0.86,4.94" fill="#ec4a5a" opacity="0.72"/>
<polygon points="-9.64,12.22 -4.79,2.22 -1.05,4.9" fill="#ec4a5a" opacity="0.72"/>
<polygon points="-10.33,6.19 -5.43,0.41 -2.84,4.22" fill="#ec4a5a" opacity="0.72"/>
<polygon points="-15.99,3.36 -5.41,-1.5 -4.28,2.96" fill="#ec4a5a" opacity="0.72"/>
<polygon points="-12.44,-1.69 -4.75,-3.29 -5.2,1.29" fill="#ec4a5a" opacity="0.72"/>
<polygon points="-14.86,-7.3 -3.51,-4.74 -5.5,-0.6" fill="#ec4a5a" opacity="0.72"/>
<polygon points="-8.73,-9 -1.84,-5.69 -5.14,-2.47" fill="#ec4a5a" opacity="0.72"/>
<polygon points="-6.78,-14.79 0.04,-6 -4.15,-4.11" fill="#ec4a5a" opacity="0.72"/>
<polygon points="-0.93,-12.34 1.92,-5.66 -2.67,-5.31" fill="#ec4a5a" opacity="0.72"/>
<polygon points="4.47,-15.59 3.57,-4.69 -0.86,-5.94" fill="#ec4a5a" opacity="0.72"/>
<polygon points="7.3,-10.14 4.79,-3.22 1.05,-5.9" fill="#ec4a5a" opacity="0.72"/>
<polygon points="13.64,-9.33 5.43,-1.41 2.84,-5.22" fill="#ec4a5a" opacity="0.72"/>
<polygon points="12.11,-3.43 5.41,0.5 4.28,-3.96" fill="#ec4a5a" opacity="0.72"/>
<circle cx="0" cy="-1" r="10" fill="#f08888" opacity="0.35"/>
<path d="M-7.500 -1.500C-7.500 -10.500 7.500 -10.500 7.500 -1.500C7.500 3 4.500 5.500 4.200 9L-4.200 9C-4.500 5.500 -7.500 3 -7.500 -1.500Z" fill="url(#bulbg)" stroke="#7a4020" stroke-width="0.8"/>
<path d="M-1 -5l1.500 2.500l-1.800 2l2 2.500l-1.200 3" fill="none" stroke="#a03020" stroke-width="0.7"/>
<rect x="-5" y="9" width="10" height="7" rx="1.500" fill="#3a3a3a"/>
<path d="M-5 11h10M-5 13h10M-4.500 15h9" stroke="#777" stroke-width="0.6"/>
</g>
<g transform="translate(1470.6 403)">
<polygon points="16.42,1.06 4.75,2.29 5.2,-2.29" fill="#ec4a5a" opacity="0.72"/>
<polygon points="11.26,4.66 3.51,3.74 5.5,-0.4" fill="#ec4a5a" opacity="0.72"/>
<polygon points="11.52,10.72 1.84,4.69 5.14,1.47" fill="#ec4a5a" opacity="0.72"/>
<polygon points="5.14,10.33 -0.04,5 4.15,3.11" fill="#ec4a5a" opacity="0.72"/>
<polygon points="1.23,15.13 -1.92,4.66 2.67,4.31" fill="#ec4a5a" opacity="0.72"/>
<polygon points="-3.39,10.93 -3.57,3.69 0.86,4.94" fill="#ec4a5a" opacity="0.72"/>
<polygon points="-9.64,12.22 -4.79,2.22 -1.05,4.9" fill="#ec4a5a" opacity="0.72"/>
<polygon points="-10.33,6.19 -5.43,0.41 -2.84,4.22" fill="#ec4a5a" opacity="0.72"/>
<polygon points="-15.99,3.36 -5.41,-1.5 -4.28,2.96" fill="#ec4a5a" opacity="0.72"/>
<polygon points="-12.44,-1.69 -4.75,-3.29 -5.2,1.29" fill="#ec4a5a" opacity="0.72"/>
<polygon points="-14.86,-7.3 -3.51,-4.74 -5.5,-0.6" fill="#ec4a5a" opacity="0.72"/>
<polygon points="-8.73,-9 -1.84,-5.69 -5.14,-2.47" fill="#ec4a5a" opacity="0.72"/>
<polygon points="-6.78,-14.79 0.04,-6 -4.15,-4.11" fill="#ec4a5a" opacity="0.72"/>
<polygon points="-0.93,-12.34 1.92,-5.66 -2.67,-5.31" fill="#ec4a5a" opacity="0.72"/>
<polygon points="4.47,-15.59 3.57,-4.69 -0.86,-5.94" fill="#ec4a5a" opacity="0.72"/>
<polygon points="7.3,-10.14 4.79,-3.22 1.05,-5.9" fill="#ec4a5a" opacity="0.72"/>
<polygon points="13.64,-9.33 5.43,-1.41 2.84,-5.22" fill="#ec4a5a" opacity="0.72"/>
<polygon points="12.11,-3.43 5.41,0.5 4.28,-3.96" fill="#ec4a5a" opacity="0.72"/>
<circle cx="0" cy="-1" r="10" fill="#f08888" opacity="0.35"/>
<path d="M-7.500 -1.500C-7.500 -10.500 7.500 -10.500 7.500 -1.500C7.500 3 4.500 5.500 4.200 9L-4.200 9C-4.500 5.500 -7.500 3 -7.500 -1.500Z" fill="url(#bulbg)" stroke="#7a4020" stroke-width="0.8"/>
<path d="M-1 -5l1.500 2.500l-1.800 2l2 2.500l-1.200 3" fill="none" stroke="#a03020" stroke-width="0.7"/>
<rect x="-5" y="9" width="10" height="7" rx="1.500" fill="#3a3a3a"/>
<path d="M-5 11h10M-5 13h10M-4.500 15h9" stroke="#777" stroke-width="0.6"/>
</g>
<g transform="translate(1470.6 476.3)">
<polygon points="16.42,1.06 4.75,2.29 5.2,-2.29" fill="#ec4a5a" opacity="0.72"/>
<polygon points="11.26,4.66 3.51,3.74 5.5,-0.4" fill="#ec4a5a" opacity="0.72"/>
<polygon points="11.52,10.72 1.84,4.69 5.14,1.47" fill="#ec4a5a" opacity="0.72"/>
<polygon points="5.14,10.33 -0.04,5 4.15,3.11" fill="#ec4a5a" opacity="0.72"/>
<polygon points="1.23,15.13 -1.92,4.66 2.67,4.31" fill="#ec4a5a" opacity="0.72"/>
<polygon points="-3.39,10.93 -3.57,3.69 0.86,4.94" fill="#ec4a5a" opacity="0.72"/>
<polygon points="-9.64,12.22 -4.79,2.22 -1.05,4.9" fill="#ec4a5a" opacity="0.72"/>
<polygon points="-10.33,6.19 -5.43,0.41 -2.84,4.22" fill="#ec4a5a" opacity="0.72"/>
<polygon points="-15.99,3.36 -5.41,-1.5 -4.28,2.96" fill="#ec4a5a" opacity="0.72"/>
<polygon points="-12.44,-1.69 -4.75,-3.29 -5.2,1.29" fill="#ec4a5a" opacity="0.72"/>
<polygon points="-14.86,-7.3 -3.51,-4.74 -5.5,-0.6" fill="#ec4a5a" opacity="0.72"/>
<polygon points="-8.73,-9 -1.84,-5.69 -5.14,-2.47" fill="#ec4a5a" opacity="0.72"/>
<polygon points="-6.78,-14.79 0.04,-6 -4.15,-4.11" fill="#ec4a5a" opacity="0.72"/>
<polygon points="-0.93,-12.34 1.92,-5.66 -2.67,-5.31" fill="#ec4a5a" opacity="0.72"/>
<polygon points="4.47,-15.59 3.57,-4.69 -0.86,-5.94" fill="#ec4a5a" opacity="0.72"/>
<polygon points="7.3,-10.14 4.79,-3.22 1.05,-5.9" fill="#ec4a5a" opacity="0.72"/>
<polygon points="13.64,-9.33 5.43,-1.41 2.84,-5.22" fill="#ec4a5a" opacity="0.72"/>
<polygon points="12.11,-3.43 5.41,0.5 4.28,-3.96" fill="#ec4a5a" opacity="0.72"/>
<circle cx="0" cy="-1" r="10" fill="#f08888" opacity="0.35"/>
<path d="M-7.500 -1.500C-7.500 -10.500 7.500 -10.500 7.500 -1.500C7.500 3 4.500 5.500 4.200 9L-4.200 9C-4.500 5.500 -7.500 3 -7.500 -1.500Z" fill="url(#bulbg)" stroke="#7a4020" stroke-width="0.8"/>
<path d="M-1 -5l1.500 2.500l-1.800 2l2 2.500l-1.200 3" fill="none" stroke="#a03020" stroke-width="0.7"/>
<rect x="-5" y="9" width="10" height="7" rx="1.500" fill="#3a3a3a"/>
<path d="M-5 11h10M-5 13h10M-4.500 15h9" stroke="#777" stroke-width="0.6"/>
</g>
<g transform="translate(1469.4 545.5)">
<polygon points="16.42,1.06 4.75,2.29 5.2,-2.29" fill="#ec4a5a" opacity="0.72"/>
<polygon points="11.26,4.66 3.51,3.74 5.5,-0.4" fill="#ec4a5a" opacity="0.72"/>
<polygon points="11.52,10.72 1.84,4.69 5.14,1.47" fill="#ec4a5a" opacity="0.72"/>
<polygon points="5.14,10.33 -0.04,5 4.15,3.11" fill="#ec4a5a" opacity="0.72"/>
<polygon points="1.23,15.13 -1.92,4.66 2.67,4.31" fill="#ec4a5a" opacity="0.72"/>
<polygon points="-3.39,10.93 -3.57,3.69 0.86,4.94" fill="#ec4a5a" opacity="0.72"/>
<polygon points="-9.64,12.22 -4.79,2.22 -1.05,4.9" fill="#ec4a5a" opacity="0.72"/>
<polygon points="-10.33,6.19 -5.43,0.41 -2.84,4.22" fill="#ec4a5a" opacity="0.72"/>
<polygon points="-15.99,3.36 -5.41,-1.5 -4.28,2.96" fill="#ec4a5a" opacity="0.72"/>
<polygon points="-12.44,-1.69 -4.75,-3.29 -5.2,1.29" fill="#ec4a5a" opacity="0.72"/>
<polygon points="-14.86,-7.3 -3.51,-4.74 -5.5,-0.6" fill="#ec4a5a" opacity="0.72"/>
<polygon points="-8.73,-9 -1.84,-5.69 -5.14,-2.47" fill="#ec4a5a" opacity="0.72"/>
<polygon points="-6.78,-14.79 0.04,-6 -4.15,-4.11" fill="#ec4a5a" opacity="0.72"/>
<polygon points="-0.93,-12.34 1.92,-5.66 -2.67,-5.31" fill="#ec4a5a" opacity="0.72"/>
<polygon points="4.47,-15.59 3.57,-4.69 -0.86,-5.94" fill="#ec4a5a" opacity="0.72"/>
<polygon points="7.3,-10.14 4.79,-3.22 1.05,-5.9" fill="#ec4a5a" opacity="0.72"/>
<polygon points="13.64,-9.33 5.43,-1.41 2.84,-5.22" fill="#ec4a5a" opacity="0.72"/>
<polygon points="12.11,-3.43 5.41,0.5 4.28,-3.96" fill="#ec4a5a" opacity="0.72"/>
<circle cx="0" cy="-1" r="10" fill="#f08888" opacity="0.35"/>
<path d="M-7.500 -1.500C-7.500 -10.500 7.500 -10.500 7.500 -1.500C7.500 3 4.500 5.500 4.200 9L-4.200 9C-4.500 5.500 -7.500 3 -7.500 -1.500Z" fill="url(#bulbg)" stroke="#7a4020" stroke-width="0.8"/>
<path d="M-1 -5l1.500 2.500l-1.800 2l2 2.500l-1.200 3" fill="none" stroke="#a03020" stroke-width="0.7"/>
<rect x="-5" y="9" width="10" height="7" rx="1.500" fill="#3a3a3a"/>
<path d="M-5 11h10M-5 13h10M-4.500 15h9" stroke="#777" stroke-width="0.6"/>
</g>
<g transform="translate(1470.6 613.5)">
<polygon points="16.42,1.06 4.75,2.29 5.2,-2.29" fill="#ec4a5a" opacity="0.72"/>
<polygon points="11.26,4.66 3.51,3.74 5.5,-0.4" fill="#ec4a5a" opacity="0.72"/>
<polygon points="11.52,10.72 1.84,4.69 5.14,1.47" fill="#ec4a5a" opacity="0.72"/>
<polygon points="5.14,10.33 -0.04,5 4.15,3.11" fill="#ec4a5a" opacity="0.72"/>
<polygon points="1.23,15.13 -1.92,4.66 2.67,4.31" fill="#ec4a5a" opacity="0.72"/>
<polygon points="-3.39,10.93 -3.57,3.69 0.86,4.94" fill="#ec4a5a" opacity="0.72"/>
<polygon points="-9.64,12.22 -4.79,2.22 -1.05,4.9" fill="#ec4a5a" opacity="0.72"/>
<polygon points="-10.33,6.19 -5.43,0.41 -2.84,4.22" fill="#ec4a5a" opacity="0.72"/>
<polygon points="-15.99,3.36 -5.41,-1.5 -4.28,2.96" fill="#ec4a5a" opacity="0.72"/>
<polygon points="-12.44,-1.69 -4.75,-3.29 -5.2,1.29" fill="#ec4a5a" opacity="0.72"/>
<polygon points="-14.86,-7.3 -3.51,-4.74 -5.5,-0.6" fill="#ec4a5a" opacity="0.72"/>
<polygon points="-8.73,-9 -1.84,-5.69 -5.14,-2.47" fill="#ec4a5a" opacity="0.72"/>
<polygon points="-6.78,-14.79 0.04,-6 -4.15,-4.11" fill="#ec4a5a" opacity="0.72"/>
<polygon points="-0.93,-12.34 1.92,-5.66 -2.67,-5.31" fill="#ec4a5a" opacity="0.72"/>
<polygon points="4.47,-15.59 3.57,-4.69 -0.86,-5.94" fill="#ec4a5a" opacity="0.72"/>
<polygon points="7.3,-10.14 4.79,-3.22 1.05,-5.9" fill="#ec4a5a" opacity="0.72"/>
<polygon points="13.64,-9.33 5.43,-1.41 2.84,-5.22" fill="#ec4a5a" opacity="0.72"/>
<polygon points="12.11,-3.43 5.41,0.5 4.28,-3.96" fill="#ec4a5a" opacity="0.72"/>
<circle cx="0" cy="-1" r="10" fill="#f08888" opacity="0.35"/>
<path d="M-7.500 -1.500C-7.500 -10.500 7.500 -10.500 7.500 -1.500C7.500 3 4.500 5.500 4.200 9L-4.200 9C-4.500 5.500 -7.500 3 -7.500 -1.500Z" fill="url(#bulbg)" stroke="#7a4020" stroke-width="0.8"/>
<path d="M-1 -5l1.500 2.500l-1.800 2l2 2.500l-1.200 3" fill="none" stroke="#a03020" stroke-width="0.7"/>
<rect x="-5" y="9" width="10" height="7" rx="1.500" fill="#3a3a3a"/>
<path d="M-5 11h10M-5 13h10M-4.500 15h9" stroke="#777" stroke-width="0.6"/>
</g>
</g></svg>
</body></html>
